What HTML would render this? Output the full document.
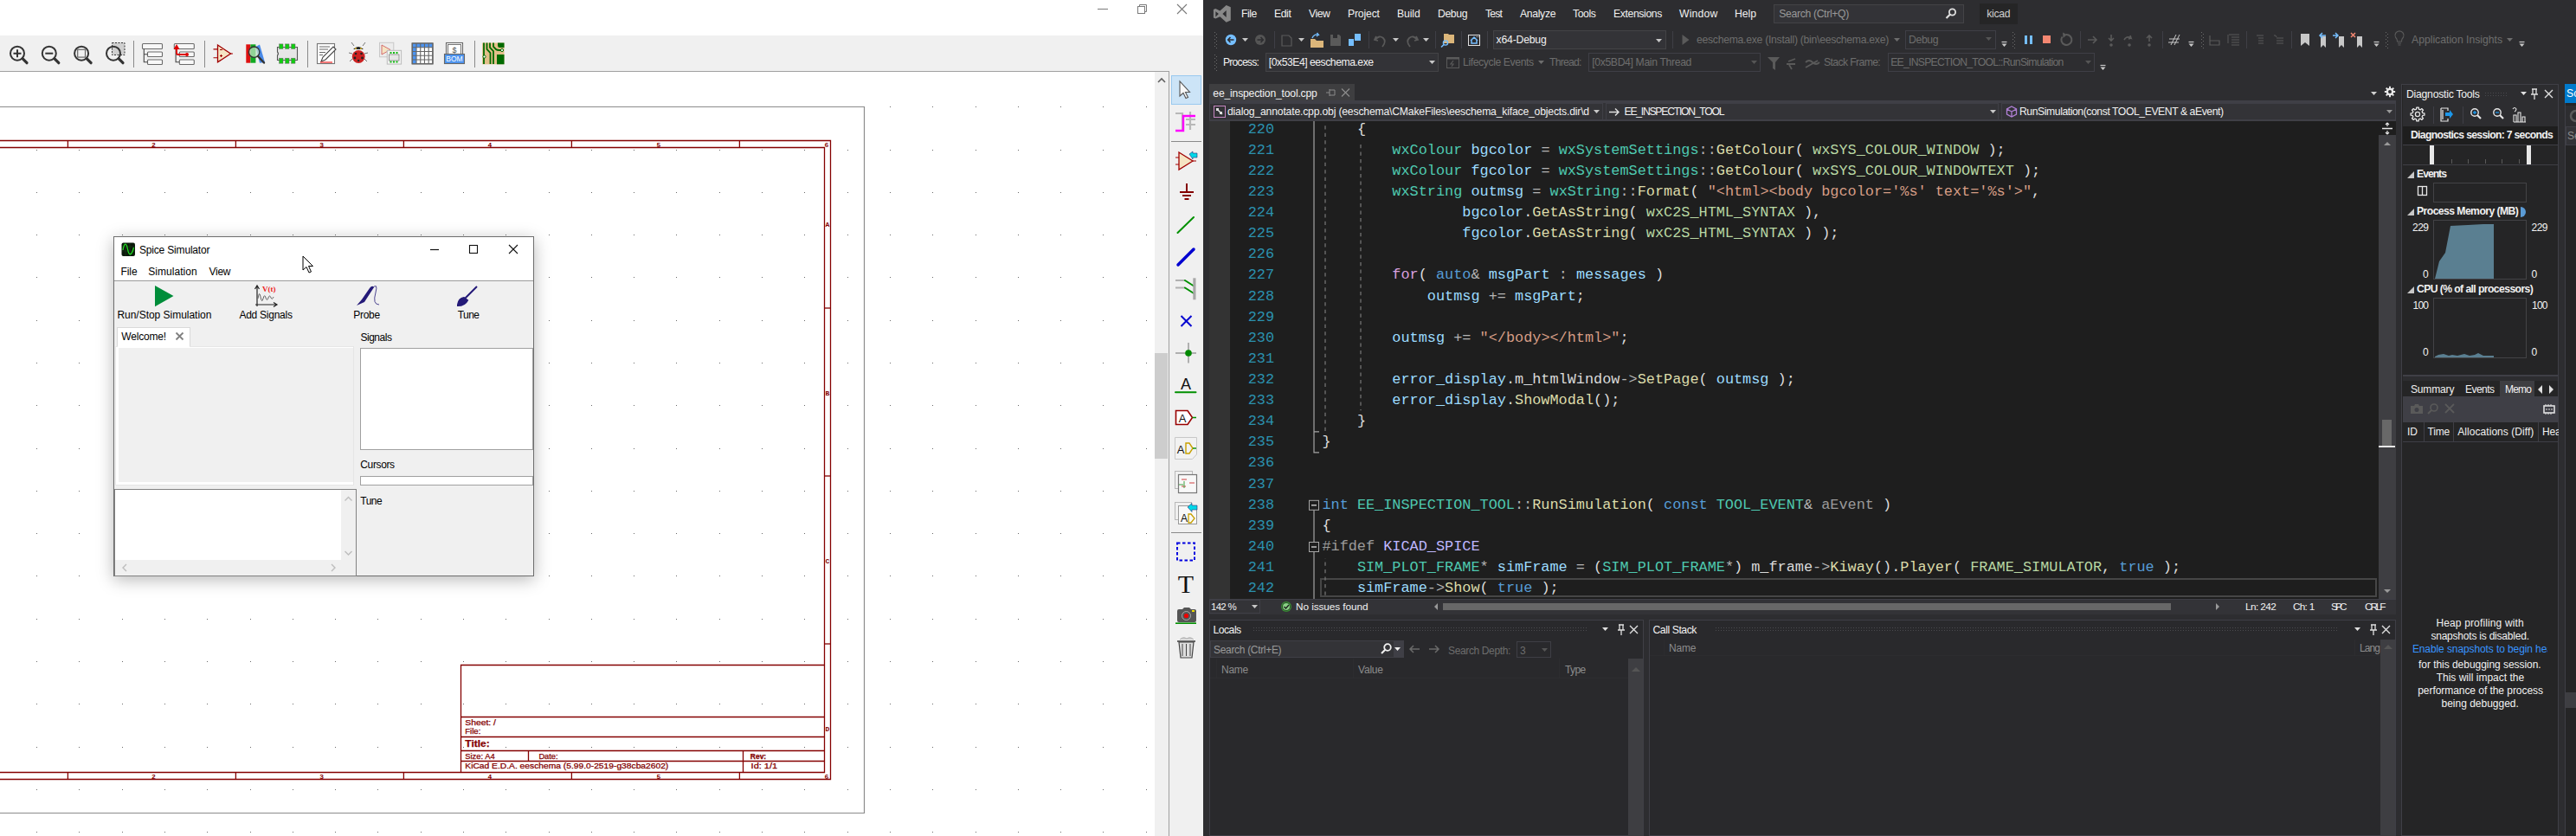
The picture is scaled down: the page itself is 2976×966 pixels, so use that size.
<!DOCTYPE html>
<html><head><meta charset="utf-8"><style>
html,body{margin:0;padding:0;}
body{width:2976px;height:966px;overflow:hidden;position:relative;background:#fff;font-family:"Liberation Sans", sans-serif;}
.t{position:absolute;white-space:pre;}
.r{position:absolute;}
svg{position:absolute;}
</style></head><body>
<svg style="left:0;top:0" width="1390" height="41" viewBox="0 0 1390 41">
<line x1="1268" y1="10.5" x2="1280" y2="10.5" stroke="#7a7a7a" stroke-width="1"/>
<rect x="1314.5" y="7.5" width="8" height="8" fill="none" stroke="#7a7a7a"/>
<path d="M1316.5 7.5 V5.5 H1324.5 V13.5 H1322.5" fill="none" stroke="#7a7a7a"/>
<path d="M1360 5 L1371 16 M1371 5 L1360 16" stroke="#7a7a7a" stroke-width="1.1"/>
</svg><div class="r" style="left:0px;top:41px;width:1390px;height:41px;background:#f0f0f0;"></div><div class="r" style="left:0px;top:82px;width:1334px;height:884px;background:#fff;"></div><div class="r" style="left:0px;top:82px;width:1350px;height:1px;background:#a0a0a0;"></div><div class="r" style="left:1334px;top:83px;width:16px;height:883px;background:#f0f0f0;"></div><div class="r" style="left:1334px;top:408px;width:15px;height:122px;background:#cdcdcd;"></div><svg style="left:1334px;top:83px" width="16" height="20"><path d="M4 12 L8 8 L12 12" fill="none" stroke="#606060" stroke-width="1.6"/></svg><div class="r" style="left:1350px;top:82px;width:1px;height:884px;background:#a0a0a0;"></div><div class="r" style="left:1351px;top:82px;width:39px;height:884px;background:#f0f0f0;"></div><svg style="left:0;top:0" width="1334" height="966" viewBox="0 0 1334 966"><path d="M42 123h1v1h-1zM91 123h1v1h-1zM141 123h1v1h-1zM190 123h1v1h-1zM239 123h1v1h-1zM289 123h1v1h-1zM338 123h1v1h-1zM387 123h1v1h-1zM436 123h1v1h-1zM486 123h1v1h-1zM535 123h1v1h-1zM584 123h1v1h-1zM634 123h1v1h-1zM683 123h1v1h-1zM732 123h1v1h-1zM781 123h1v1h-1zM831 123h1v1h-1zM880 123h1v1h-1zM929 123h1v1h-1zM979 123h1v1h-1zM1028 123h1v1h-1zM1077 123h1v1h-1zM1127 123h1v1h-1zM1176 123h1v1h-1zM1225 123h1v1h-1zM1274 123h1v1h-1zM1324 123h1v1h-1zM42 173h1v1h-1zM91 173h1v1h-1zM141 173h1v1h-1zM190 173h1v1h-1zM239 173h1v1h-1zM289 173h1v1h-1zM338 173h1v1h-1zM387 173h1v1h-1zM436 173h1v1h-1zM486 173h1v1h-1zM535 173h1v1h-1zM584 173h1v1h-1zM634 173h1v1h-1zM683 173h1v1h-1zM732 173h1v1h-1zM781 173h1v1h-1zM831 173h1v1h-1zM880 173h1v1h-1zM929 173h1v1h-1zM979 173h1v1h-1zM1028 173h1v1h-1zM1077 173h1v1h-1zM1127 173h1v1h-1zM1176 173h1v1h-1zM1225 173h1v1h-1zM1274 173h1v1h-1zM1324 173h1v1h-1zM42 222h1v1h-1zM91 222h1v1h-1zM141 222h1v1h-1zM190 222h1v1h-1zM239 222h1v1h-1zM289 222h1v1h-1zM338 222h1v1h-1zM387 222h1v1h-1zM436 222h1v1h-1zM486 222h1v1h-1zM535 222h1v1h-1zM584 222h1v1h-1zM634 222h1v1h-1zM683 222h1v1h-1zM732 222h1v1h-1zM781 222h1v1h-1zM831 222h1v1h-1zM880 222h1v1h-1zM929 222h1v1h-1zM979 222h1v1h-1zM1028 222h1v1h-1zM1077 222h1v1h-1zM1127 222h1v1h-1zM1176 222h1v1h-1zM1225 222h1v1h-1zM1274 222h1v1h-1zM1324 222h1v1h-1zM42 271h1v1h-1zM91 271h1v1h-1zM141 271h1v1h-1zM190 271h1v1h-1zM239 271h1v1h-1zM289 271h1v1h-1zM338 271h1v1h-1zM387 271h1v1h-1zM436 271h1v1h-1zM486 271h1v1h-1zM535 271h1v1h-1zM584 271h1v1h-1zM634 271h1v1h-1zM683 271h1v1h-1zM732 271h1v1h-1zM781 271h1v1h-1zM831 271h1v1h-1zM880 271h1v1h-1zM929 271h1v1h-1zM979 271h1v1h-1zM1028 271h1v1h-1zM1077 271h1v1h-1zM1127 271h1v1h-1zM1176 271h1v1h-1zM1225 271h1v1h-1zM1274 271h1v1h-1zM1324 271h1v1h-1zM42 320h1v1h-1zM91 320h1v1h-1zM141 320h1v1h-1zM190 320h1v1h-1zM239 320h1v1h-1zM289 320h1v1h-1zM338 320h1v1h-1zM387 320h1v1h-1zM436 320h1v1h-1zM486 320h1v1h-1zM535 320h1v1h-1zM584 320h1v1h-1zM634 320h1v1h-1zM683 320h1v1h-1zM732 320h1v1h-1zM781 320h1v1h-1zM831 320h1v1h-1zM880 320h1v1h-1zM929 320h1v1h-1zM979 320h1v1h-1zM1028 320h1v1h-1zM1077 320h1v1h-1zM1127 320h1v1h-1zM1176 320h1v1h-1zM1225 320h1v1h-1zM1274 320h1v1h-1zM1324 320h1v1h-1zM42 370h1v1h-1zM91 370h1v1h-1zM141 370h1v1h-1zM190 370h1v1h-1zM239 370h1v1h-1zM289 370h1v1h-1zM338 370h1v1h-1zM387 370h1v1h-1zM436 370h1v1h-1zM486 370h1v1h-1zM535 370h1v1h-1zM584 370h1v1h-1zM634 370h1v1h-1zM683 370h1v1h-1zM732 370h1v1h-1zM781 370h1v1h-1zM831 370h1v1h-1zM880 370h1v1h-1zM929 370h1v1h-1zM979 370h1v1h-1zM1028 370h1v1h-1zM1077 370h1v1h-1zM1127 370h1v1h-1zM1176 370h1v1h-1zM1225 370h1v1h-1zM1274 370h1v1h-1zM1324 370h1v1h-1zM42 419h1v1h-1zM91 419h1v1h-1zM141 419h1v1h-1zM190 419h1v1h-1zM239 419h1v1h-1zM289 419h1v1h-1zM338 419h1v1h-1zM387 419h1v1h-1zM436 419h1v1h-1zM486 419h1v1h-1zM535 419h1v1h-1zM584 419h1v1h-1zM634 419h1v1h-1zM683 419h1v1h-1zM732 419h1v1h-1zM781 419h1v1h-1zM831 419h1v1h-1zM880 419h1v1h-1zM929 419h1v1h-1zM979 419h1v1h-1zM1028 419h1v1h-1zM1077 419h1v1h-1zM1127 419h1v1h-1zM1176 419h1v1h-1zM1225 419h1v1h-1zM1274 419h1v1h-1zM1324 419h1v1h-1zM42 468h1v1h-1zM91 468h1v1h-1zM141 468h1v1h-1zM190 468h1v1h-1zM239 468h1v1h-1zM289 468h1v1h-1zM338 468h1v1h-1zM387 468h1v1h-1zM436 468h1v1h-1zM486 468h1v1h-1zM535 468h1v1h-1zM584 468h1v1h-1zM634 468h1v1h-1zM683 468h1v1h-1zM732 468h1v1h-1zM781 468h1v1h-1zM831 468h1v1h-1zM880 468h1v1h-1zM929 468h1v1h-1zM979 468h1v1h-1zM1028 468h1v1h-1zM1077 468h1v1h-1zM1127 468h1v1h-1zM1176 468h1v1h-1zM1225 468h1v1h-1zM1274 468h1v1h-1zM1324 468h1v1h-1zM42 518h1v1h-1zM91 518h1v1h-1zM141 518h1v1h-1zM190 518h1v1h-1zM239 518h1v1h-1zM289 518h1v1h-1zM338 518h1v1h-1zM387 518h1v1h-1zM436 518h1v1h-1zM486 518h1v1h-1zM535 518h1v1h-1zM584 518h1v1h-1zM634 518h1v1h-1zM683 518h1v1h-1zM732 518h1v1h-1zM781 518h1v1h-1zM831 518h1v1h-1zM880 518h1v1h-1zM929 518h1v1h-1zM979 518h1v1h-1zM1028 518h1v1h-1zM1077 518h1v1h-1zM1127 518h1v1h-1zM1176 518h1v1h-1zM1225 518h1v1h-1zM1274 518h1v1h-1zM1324 518h1v1h-1zM42 567h1v1h-1zM91 567h1v1h-1zM141 567h1v1h-1zM190 567h1v1h-1zM239 567h1v1h-1zM289 567h1v1h-1zM338 567h1v1h-1zM387 567h1v1h-1zM436 567h1v1h-1zM486 567h1v1h-1zM535 567h1v1h-1zM584 567h1v1h-1zM634 567h1v1h-1zM683 567h1v1h-1zM732 567h1v1h-1zM781 567h1v1h-1zM831 567h1v1h-1zM880 567h1v1h-1zM929 567h1v1h-1zM979 567h1v1h-1zM1028 567h1v1h-1zM1077 567h1v1h-1zM1127 567h1v1h-1zM1176 567h1v1h-1zM1225 567h1v1h-1zM1274 567h1v1h-1zM1324 567h1v1h-1zM42 616h1v1h-1zM91 616h1v1h-1zM141 616h1v1h-1zM190 616h1v1h-1zM239 616h1v1h-1zM289 616h1v1h-1zM338 616h1v1h-1zM387 616h1v1h-1zM436 616h1v1h-1zM486 616h1v1h-1zM535 616h1v1h-1zM584 616h1v1h-1zM634 616h1v1h-1zM683 616h1v1h-1zM732 616h1v1h-1zM781 616h1v1h-1zM831 616h1v1h-1zM880 616h1v1h-1zM929 616h1v1h-1zM979 616h1v1h-1zM1028 616h1v1h-1zM1077 616h1v1h-1zM1127 616h1v1h-1zM1176 616h1v1h-1zM1225 616h1v1h-1zM1274 616h1v1h-1zM1324 616h1v1h-1zM42 665h1v1h-1zM91 665h1v1h-1zM141 665h1v1h-1zM190 665h1v1h-1zM239 665h1v1h-1zM289 665h1v1h-1zM338 665h1v1h-1zM387 665h1v1h-1zM436 665h1v1h-1zM486 665h1v1h-1zM535 665h1v1h-1zM584 665h1v1h-1zM634 665h1v1h-1zM683 665h1v1h-1zM732 665h1v1h-1zM781 665h1v1h-1zM831 665h1v1h-1zM880 665h1v1h-1zM929 665h1v1h-1zM979 665h1v1h-1zM1028 665h1v1h-1zM1077 665h1v1h-1zM1127 665h1v1h-1zM1176 665h1v1h-1zM1225 665h1v1h-1zM1274 665h1v1h-1zM1324 665h1v1h-1zM42 715h1v1h-1zM91 715h1v1h-1zM141 715h1v1h-1zM190 715h1v1h-1zM239 715h1v1h-1zM289 715h1v1h-1zM338 715h1v1h-1zM387 715h1v1h-1zM436 715h1v1h-1zM486 715h1v1h-1zM535 715h1v1h-1zM584 715h1v1h-1zM634 715h1v1h-1zM683 715h1v1h-1zM732 715h1v1h-1zM781 715h1v1h-1zM831 715h1v1h-1zM880 715h1v1h-1zM929 715h1v1h-1zM979 715h1v1h-1zM1028 715h1v1h-1zM1077 715h1v1h-1zM1127 715h1v1h-1zM1176 715h1v1h-1zM1225 715h1v1h-1zM1274 715h1v1h-1zM1324 715h1v1h-1zM42 764h1v1h-1zM91 764h1v1h-1zM141 764h1v1h-1zM190 764h1v1h-1zM239 764h1v1h-1zM289 764h1v1h-1zM338 764h1v1h-1zM387 764h1v1h-1zM436 764h1v1h-1zM486 764h1v1h-1zM535 764h1v1h-1zM584 764h1v1h-1zM634 764h1v1h-1zM683 764h1v1h-1zM732 764h1v1h-1zM781 764h1v1h-1zM831 764h1v1h-1zM880 764h1v1h-1zM929 764h1v1h-1zM979 764h1v1h-1zM1028 764h1v1h-1zM1077 764h1v1h-1zM1127 764h1v1h-1zM1176 764h1v1h-1zM1225 764h1v1h-1zM1274 764h1v1h-1zM1324 764h1v1h-1zM42 813h1v1h-1zM91 813h1v1h-1zM141 813h1v1h-1zM190 813h1v1h-1zM239 813h1v1h-1zM289 813h1v1h-1zM338 813h1v1h-1zM387 813h1v1h-1zM436 813h1v1h-1zM486 813h1v1h-1zM535 813h1v1h-1zM584 813h1v1h-1zM634 813h1v1h-1zM683 813h1v1h-1zM732 813h1v1h-1zM781 813h1v1h-1zM831 813h1v1h-1zM880 813h1v1h-1zM929 813h1v1h-1zM979 813h1v1h-1zM1028 813h1v1h-1zM1077 813h1v1h-1zM1127 813h1v1h-1zM1176 813h1v1h-1zM1225 813h1v1h-1zM1274 813h1v1h-1zM1324 813h1v1h-1zM42 863h1v1h-1zM91 863h1v1h-1zM141 863h1v1h-1zM190 863h1v1h-1zM239 863h1v1h-1zM289 863h1v1h-1zM338 863h1v1h-1zM387 863h1v1h-1zM436 863h1v1h-1zM486 863h1v1h-1zM535 863h1v1h-1zM584 863h1v1h-1zM634 863h1v1h-1zM683 863h1v1h-1zM732 863h1v1h-1zM781 863h1v1h-1zM831 863h1v1h-1zM880 863h1v1h-1zM929 863h1v1h-1zM979 863h1v1h-1zM1028 863h1v1h-1zM1077 863h1v1h-1zM1127 863h1v1h-1zM1176 863h1v1h-1zM1225 863h1v1h-1zM1274 863h1v1h-1zM1324 863h1v1h-1zM42 912h1v1h-1zM91 912h1v1h-1zM141 912h1v1h-1zM190 912h1v1h-1zM239 912h1v1h-1zM289 912h1v1h-1zM338 912h1v1h-1zM387 912h1v1h-1zM436 912h1v1h-1zM486 912h1v1h-1zM535 912h1v1h-1zM584 912h1v1h-1zM634 912h1v1h-1zM683 912h1v1h-1zM732 912h1v1h-1zM781 912h1v1h-1zM831 912h1v1h-1zM880 912h1v1h-1zM929 912h1v1h-1zM979 912h1v1h-1zM1028 912h1v1h-1zM1077 912h1v1h-1zM1127 912h1v1h-1zM1176 912h1v1h-1zM1225 912h1v1h-1zM1274 912h1v1h-1zM1324 912h1v1h-1zM42 961h1v1h-1zM91 961h1v1h-1zM141 961h1v1h-1zM190 961h1v1h-1zM239 961h1v1h-1zM289 961h1v1h-1zM338 961h1v1h-1zM387 961h1v1h-1zM436 961h1v1h-1zM486 961h1v1h-1zM535 961h1v1h-1zM584 961h1v1h-1zM634 961h1v1h-1zM683 961h1v1h-1zM732 961h1v1h-1zM781 961h1v1h-1zM831 961h1v1h-1zM880 961h1v1h-1zM929 961h1v1h-1zM979 961h1v1h-1zM1028 961h1v1h-1zM1077 961h1v1h-1zM1127 961h1v1h-1zM1176 961h1v1h-1zM1225 961h1v1h-1zM1274 961h1v1h-1zM1324 961h1v1h-1z" fill="#6a6a6a"/><path d="M0 123.5 H998.5 V939.5 H0" fill="none" stroke="#8c8c8c" stroke-width="1.2"/><path d="M0 162.5 H959.5 V900.5 H0 M0 170.5 H952.5 V892.5 H0" fill="none" stroke="#840000" stroke-width="1.3"/><path d="M78.4 162.5 V170.5 M78.4 892.5 V900.5" stroke="#840000" stroke-width="1.3"/><path d="M272.4 162.5 V170.5 M272.4 892.5 V900.5" stroke="#840000" stroke-width="1.3"/><path d="M466.4 162.5 V170.5 M466.4 892.5 V900.5" stroke="#840000" stroke-width="1.3"/><path d="M660.4 162.5 V170.5 M660.4 892.5 V900.5" stroke="#840000" stroke-width="1.3"/><path d="M854.4 162.5 V170.5 M854.4 892.5 V900.5" stroke="#840000" stroke-width="1.3"/><path d="M952.5 356 H959.5" stroke="#840000" stroke-width="1.3"/><path d="M952.5 550 H959.5" stroke="#840000" stroke-width="1.3"/><path d="M952.5 744 H959.5" stroke="#840000" stroke-width="1.3"/><text x="177.4" y="169.5" font-family="Liberation Mono" font-size="8" fill="#840000" text-anchor="middle" font-weight="bold">2</text><text x="177.4" y="899.5" font-family="Liberation Mono" font-size="8" fill="#840000" text-anchor="middle" font-weight="bold">2</text><text x="371.7" y="169.5" font-family="Liberation Mono" font-size="8" fill="#840000" text-anchor="middle" font-weight="bold">3</text><text x="371.7" y="899.5" font-family="Liberation Mono" font-size="8" fill="#840000" text-anchor="middle" font-weight="bold">3</text><text x="566" y="169.5" font-family="Liberation Mono" font-size="8" fill="#840000" text-anchor="middle" font-weight="bold">4</text><text x="566" y="899.5" font-family="Liberation Mono" font-size="8" fill="#840000" text-anchor="middle" font-weight="bold">4</text><text x="761" y="169.5" font-family="Liberation Mono" font-size="8" fill="#840000" text-anchor="middle" font-weight="bold">5</text><text x="761" y="899.5" font-family="Liberation Mono" font-size="8" fill="#840000" text-anchor="middle" font-weight="bold">5</text><text x="955" y="169.5" font-family="Liberation Mono" font-size="8" fill="#840000" text-anchor="middle" font-weight="bold">6</text><text x="955" y="899.5" font-family="Liberation Mono" font-size="8" fill="#840000" text-anchor="middle" font-weight="bold">6</text><text x="956" y="261.5" font-family="Liberation Mono" font-size="8" fill="#840000" text-anchor="middle" font-weight="bold">A</text><text x="956" y="456.5" font-family="Liberation Mono" font-size="8" fill="#840000" text-anchor="middle" font-weight="bold">B</text><text x="956" y="650.5" font-family="Liberation Mono" font-size="8" fill="#840000" text-anchor="middle" font-weight="bold">C</text><text x="956" y="845" font-family="Liberation Mono" font-size="8" fill="#840000" text-anchor="middle" font-weight="bold">D</text><path d="M532.5 892.5 V768.5 H952.5 M532.5 828.5 H952.5 M532.5 851.5 H952.5 M532.5 867.5 H952.5 M532.5 879.5 H952.5 M610.5 867.5 V879.5 M858.5 867.5 V892.5" fill="none" stroke="#840000" stroke-width="1.3"/><text x="537.3" y="837.5" font-family="Liberation Sans" font-size="8.5" fill="#840000" font-weight="normal" textLength="35.7" lengthAdjust="spacingAndGlyphs" stroke="#840000" stroke-width="0.25">Sheet: /</text><text x="537.3" y="847.5" font-family="Liberation Sans" font-size="8.5" fill="#840000" font-weight="normal" textLength="18" lengthAdjust="spacingAndGlyphs" stroke="#840000" stroke-width="0.25">File:</text><text x="537.3" y="862.5" font-family="Liberation Sans" font-size="10.5" fill="#840000" font-weight="bold" textLength="28.4" lengthAdjust="spacingAndGlyphs" stroke="#840000" stroke-width="0.25">Title:</text><text x="537.3" y="876.5" font-family="Liberation Sans" font-size="8.5" fill="#840000" font-weight="normal" textLength="34.3" lengthAdjust="spacingAndGlyphs" stroke="#840000" stroke-width="0.25">Size: A4</text><text x="622.4" y="876.5" font-family="Liberation Sans" font-size="8.5" fill="#840000" font-weight="normal" textLength="22.2" lengthAdjust="spacingAndGlyphs" stroke="#840000" stroke-width="0.25">Date:</text><text x="866.8" y="876.5" font-family="Liberation Sans" font-size="8.5" fill="#840000" font-weight="bold" textLength="18.4" lengthAdjust="spacingAndGlyphs" stroke="#840000" stroke-width="0.25">Rev:</text><text x="537.3" y="888.3" font-family="Liberation Sans" font-size="8.5" fill="#840000" font-weight="normal" textLength="235" lengthAdjust="spacingAndGlyphs" stroke="#840000" stroke-width="0.25">KiCad E.D.A.  eeschema (5.99.0-2519-g38cba2602)</text><text x="867.6" y="888.3" font-family="Liberation Sans" font-size="8.5" fill="#840000" font-weight="normal" textLength="30.5" lengthAdjust="spacingAndGlyphs" stroke="#840000" stroke-width="0.25">Id: 1/1</text></svg><div class="r" style="left:1390px;top:0px;width:1586px;height:966px;background:#2d2d30;"></div><svg style="left:1390px;top:0px" width="40" height="30" viewBox="1390 0 40 30"><path d="M1416.7 6.1 L1421.8 8.3 V23.4 L1416.7 25.8 L1409.4 19.3 L1404.3 21.6 L1401.9 20.4 V11.1 L1404.3 9.9 L1409.4 12.4 Z M1404.4 13.3 V19.4 L1407.9 15.9 Z M1416.7 12 L1412.4 15.9 L1416.7 20 Z" fill="#888888" fill-rule="evenodd"/></svg><div class="t" style="left:1434px;top:7.96px;font-size:12.2px;line-height:17.08px;color:#f1f1f1;font-weight:normal;font-family:'Liberation Sans', sans-serif;letter-spacing:-0.486px;">File</div><div class="t" style="left:1472px;top:7.96px;font-size:12.2px;line-height:17.08px;color:#f1f1f1;font-weight:normal;font-family:'Liberation Sans', sans-serif;letter-spacing:-0.408px;">Edit</div><div class="t" style="left:1512px;top:7.96px;font-size:12.2px;line-height:17.08px;color:#f1f1f1;font-weight:normal;font-family:'Liberation Sans', sans-serif;letter-spacing:-0.441px;">View</div><div class="t" style="left:1557px;top:7.96px;font-size:12.2px;line-height:17.08px;color:#f1f1f1;font-weight:normal;font-family:'Liberation Sans', sans-serif;letter-spacing:-0.162px;">Project</div><div class="t" style="left:1614px;top:7.96px;font-size:12.2px;line-height:17.08px;color:#f1f1f1;font-weight:normal;font-family:'Liberation Sans', sans-serif;letter-spacing:-0.082px;">Build</div><div class="t" style="left:1661px;top:7.96px;font-size:12.2px;line-height:17.08px;color:#f1f1f1;font-weight:normal;font-family:'Liberation Sans', sans-serif;letter-spacing:-0.363px;">Debug</div><div class="t" style="left:1716px;top:7.96px;font-size:12.2px;line-height:17.08px;color:#f1f1f1;font-weight:normal;font-family:'Liberation Sans', sans-serif;letter-spacing:-0.858px;">Test</div><div class="t" style="left:1756px;top:7.96px;font-size:12.2px;line-height:17.08px;color:#f1f1f1;font-weight:normal;font-family:'Liberation Sans', sans-serif;letter-spacing:-0.317px;">Analyze</div><div class="t" style="left:1817px;top:7.96px;font-size:12.2px;line-height:17.08px;color:#f1f1f1;font-weight:normal;font-family:'Liberation Sans', sans-serif;letter-spacing:-0.42px;">Tools</div><div class="t" style="left:1864px;top:7.96px;font-size:12.2px;line-height:17.08px;color:#f1f1f1;font-weight:normal;font-family:'Liberation Sans', sans-serif;letter-spacing:-0.364px;">Extensions</div><div class="t" style="left:1940px;top:7.96px;font-size:12.2px;line-height:17.08px;color:#f1f1f1;font-weight:normal;font-family:'Liberation Sans', sans-serif;letter-spacing:0.182px;">Window</div><div class="t" style="left:2004px;top:7.96px;font-size:12.2px;line-height:17.08px;color:#f1f1f1;font-weight:normal;font-family:'Liberation Sans', sans-serif;letter-spacing:-0.031px;">Help</div><div class="r" style="left:2049px;top:5px;width:220px;height:22px;background:#333337;box-sizing:border-box;border:1px solid #434346;"></div><div class="t" style="left:2055.2px;top:7.96px;font-size:12.2px;line-height:17.08px;color:#999999;font-weight:normal;font-family:'Liberation Sans', sans-serif;letter-spacing:-0.326px;">Search (Ctrl+Q)</div><svg style="left:2246px;top:8px" width="16" height="16" viewBox="0 0 16 16"><circle cx="9.5" cy="6" r="3.6" fill="none" stroke="#e0e0e0" stroke-width="1.8"/><path d="M7 8.5 L2.5 13" stroke="#e0e0e0" stroke-width="2.2"/></svg><div class="r" style="left:2287px;top:4px;width:44px;height:24px;background:#252526;"></div><div class="t" style="left:2295.2px;top:7.96px;font-size:12.2px;line-height:17.08px;color:#d0d0d0;font-weight:normal;font-family:'Liberation Sans', sans-serif;letter-spacing:-0.295px;">kicad</div><svg style="left:0;top:0" width="2976" height="90"><rect x="1403" y="37" width="1" height="1" fill="#6a6a6a"/><rect x="1405" y="39" width="1" height="1" fill="#6a6a6a"/><rect x="1403" y="41" width="1" height="1" fill="#6a6a6a"/><rect x="1405" y="43" width="1" height="1" fill="#6a6a6a"/><rect x="1403" y="45" width="1" height="1" fill="#6a6a6a"/><rect x="1405" y="47" width="1" height="1" fill="#6a6a6a"/><rect x="1403" y="49" width="1" height="1" fill="#6a6a6a"/><rect x="1405" y="51" width="1" height="1" fill="#6a6a6a"/><rect x="1403" y="53" width="1" height="1" fill="#6a6a6a"/><rect x="1405" y="55" width="1" height="1" fill="#6a6a6a"/></svg><svg style="left:1390px;top:28px" width="1586" height="60" viewBox="1390 28 1586 60">
<circle cx="1422" cy="46" r="6.2" fill="#75beff"/><path d="M1425.5 46 H1419 M1421.5 43 L1418.7 46 L1421.5 49" fill="none" stroke="#2d2d30" stroke-width="1.6"/>
<circle cx="1456" cy="46" r="6" fill="#555"/><path d="M1452.5 46 H1459 M1456.5 43 L1459.3 46 L1456.5 49" fill="none" stroke="#2d2d30" stroke-width="1.6"/>
<path d="M1481 41 h8 l3 3 v9 h-11 z" fill="none" stroke="#5a5a5a" stroke-width="1.2"/>
<path d="M1514 45 h5 l2 2 h8 v8 h-15 z" fill="#dcb67a"/><path d="M1516 44 q2-5 7-4 l-1.5-2 M1523 40 l-2 2" fill="none" stroke="#75beff" stroke-width="1.4"/>
<path d="M1537 40 h10 l2 2 v11 h-12 z" fill="#5a5a5a"/><rect x="1540" y="40" width="5" height="4" fill="#2d2d30"/>
<path d="M1558 45 h6 v8 h-6 z M1565 39 h7 v8 h-7 z" fill="#75beff"/>
<path d="M1590 42 l-2 4 l4 1 M1589 46 q4-6 9-2 q4 4 -1 10" fill="none" stroke="#5a5a5a" stroke-width="1.8"/>
<path d="M1636 42 l2 4 l-4 1 M1637 46 q-4-6 -9-2 q-4 4 1 10" fill="none" stroke="#5a5a5a" stroke-width="1.8"/>
<path d="M1668 39 h5 l1 1 h6 v10 h-12 z" fill="#dcb67a"/><circle cx="1670" cy="49.5" r="2.6" fill="none" stroke="#75beff" stroke-width="1.4"/><path d="M1668 51.5 l-3 3" stroke="#75beff" stroke-width="1.6"/>
<rect x="1696.5" y="40.5" width="13" height="12" fill="none" stroke="#e0e0e0"/><path d="M1699 47 l4-4 l4 4 M1700 46 v4 h6 v-4" fill="none" stroke="#75beff" stroke-width="1.5"/><path d="M1705.5 42.5 h1 M1707.5 42.5 h1" stroke="#e0e0e0"/>
<path d="M1943.5 40 v12 l8 -6 z" fill="#5a5a5a"/>
</svg><svg style="left:1435px;top:44px" width="8" height="5"><path d="M0 0 H7 L3.5 4 Z" fill="#c8c8c8"/></svg><svg style="left:1500px;top:44px" width="8" height="5"><path d="M0 0 H7 L3.5 4 Z" fill="#c8c8c8"/></svg><svg style="left:1609px;top:44px" width="8" height="5"><path d="M0 0 H7 L3.5 4 Z" fill="#c8c8c8"/></svg><svg style="left:1644px;top:44px" width="8" height="5"><path d="M0 0 H7 L3.5 4 Z" fill="#c8c8c8"/></svg><div class="r" style="left:1472px;top:36px;width:1px;height:20px;background:#3f3f46;"></div><div class="r" style="left:1581px;top:36px;width:1px;height:20px;background:#3f3f46;"></div><div class="r" style="left:1658px;top:36px;width:1px;height:20px;background:#3f3f46;"></div><div class="r" style="left:1688px;top:36px;width:1px;height:20px;background:#3f3f46;"></div><div class="r" style="left:1718px;top:36px;width:1px;height:20px;background:#3f3f46;"></div><div class="r" style="left:1932px;top:36px;width:1px;height:20px;background:#3f3f46;"></div><div class="r" style="left:1725px;top:35px;width:200px;height:22px;background:#333337;box-sizing:border-box;border:1px solid #434346;"></div><div class="t" style="left:1728.6px;top:38.46px;font-size:12.2px;line-height:17.08px;color:#f1f1f1;font-weight:normal;font-family:'Liberation Sans', sans-serif;letter-spacing:-0.186px;">x64-Debug</div><svg style="left:1913px;top:45px" width="8" height="5"><path d="M0 0 H7 L3.5 4 Z" fill="#c8c8c8"/></svg><div class="t" style="left:1960px;top:38.46px;font-size:12.2px;line-height:17.08px;color:#6d6d6d;font-weight:normal;font-family:'Liberation Sans', sans-serif;letter-spacing:-0.269px;">eeschema.exe (Install) (bin\eeschema.exe)</div><svg style="left:2188px;top:44px" width="8" height="5"><path d="M0 0 H7 L3.5 4 Z" fill="#6d6d6d"/></svg><div class="r" style="left:2201px;top:35px;width:105px;height:22px;background:#2d2d30;box-sizing:border-box;border:1px solid #3f3f46;"></div><div class="t" style="left:2205px;top:38.46px;font-size:12.2px;line-height:17.08px;color:#6d6d6d;font-weight:normal;font-family:'Liberation Sans', sans-serif;letter-spacing:-0.338px;">Debug</div><svg style="left:2294px;top:43px" width="8" height="5"><path d="M0 0 H7 L3.5 4 Z" fill="#555"/></svg><svg style="left:2312px;top:47px" width="8" height="8"><path d="M0.5 1.5 H6.5" stroke="#c8c8c8" stroke-width="1.2"/><path d="M0.5 3.5 H6.5 L3.5 7 Z" fill="#c8c8c8"/></svg><svg style="left:0;top:0" width="2976" height="90"><rect x="2325" y="37" width="1" height="1" fill="#6a6a6a"/><rect x="2327" y="39" width="1" height="1" fill="#6a6a6a"/><rect x="2325" y="41" width="1" height="1" fill="#6a6a6a"/><rect x="2327" y="43" width="1" height="1" fill="#6a6a6a"/><rect x="2325" y="45" width="1" height="1" fill="#6a6a6a"/><rect x="2327" y="47" width="1" height="1" fill="#6a6a6a"/><rect x="2325" y="49" width="1" height="1" fill="#6a6a6a"/><rect x="2327" y="51" width="1" height="1" fill="#6a6a6a"/><rect x="2325" y="53" width="1" height="1" fill="#6a6a6a"/><rect x="2327" y="55" width="1" height="1" fill="#6a6a6a"/></svg><svg style="left:2330px;top:28px" width="646" height="60" viewBox="2330 28 646 60">
<rect x="2339" y="41" width="3" height="10" fill="#75beff"/><rect x="2345" y="41" width="3" height="10" fill="#75beff"/>
<rect x="2360" y="41" width="9" height="9" fill="#f48771"/>
<path d="M2382.5 42.5 A6 6 0 1 0 2387 40" fill="none" stroke="#5a5a5a" stroke-width="2"/><path d="M2383 37.5 L2388 40 L2383.5 44 Z" fill="#5a5a5a"/>
<path d="M2412 46 h10 M2418 42 l4 4 l-4 4" fill="none" stroke="#5a5a5a" stroke-width="1.6"/>
<path d="M2439 40 v7 M2436 44 l3 3 l3 -3" fill="none" stroke="#5a5a5a" stroke-width="1.6"/><circle cx="2439" cy="52" r="1.8" fill="#5a5a5a"/>
<path d="M2454 46 q3-5 8-2 l-1-3 M2462 44 l-3 1" fill="none" stroke="#5a5a5a" stroke-width="1.6"/><circle cx="2460" cy="52" r="1.8" fill="#5a5a5a"/>
<path d="M2483 48 v-7 M2480 44 l3 -3 l3 3" fill="none" stroke="#5a5a5a" stroke-width="1.6"/><circle cx="2483" cy="52" r="1.8" fill="#5a5a5a"/>
<path d="M2508 52 l6-12 M2512 52 l6-12 M2506 45 h12 M2505 49 h12" fill="none" stroke="#c8c8c8" stroke-width="1"/>
<path d="M2553 41 v6 h11 v5 h-11 z" fill="none" stroke="#5a5a5a" stroke-width="1.2"/>
<path d="M2575 40 h12 M2578 43 h9 M2578 46 h9 M2578 49 h9 M2578 52 h9 M2574 40 v10" fill="none" stroke="#5a5a5a" stroke-width="1"/>
<path d="M2607 41 h8 M2609 44 h6 M2609 47 h6 M2609 50 h6" fill="none" stroke="#5a5a5a" stroke-width="1"/>
<path d="M2627 41 h2 l1 2 M2630 44 h8 M2630 47 h8 M2630 50 h8" fill="none" stroke="#5a5a5a" stroke-width="1"/>
<path d="M2658 39 h10 v14 l-5 -4 l-5 4 z" fill="#c8c8c8"/>
<path d="M2681 42 h6 v13 l-3-3 l-3 3 z" fill="#c8c8c8"/><path d="M2687 41 h-6 M2683 38 l-3 3 l3 3" fill="none" stroke="#75beff" stroke-width="1.5"/>
<path d="M2702 42 h6 v13 l-3-3 l-3 3 z" fill="#c8c8c8"/><path d="M2695 41 h6 M2698 38 l3 3 l-3 3" fill="none" stroke="#75beff" stroke-width="1.5"/>
<path d="M2723 42 h6 v13 l-3-3 l-3 3 z" fill="#c8c8c8"/><path d="M2716 38 l5 5 M2721 38 l-5 5" fill="none" stroke="#f48771" stroke-width="1.5"/>
<path d="M2769.5 48 Q2769.5 45 2767.5 43 A5 5 0 1 1 2776.5 43 Q2774.5 45 2774.5 48 Z M2770 50 h4 M2770.5 52 h3" fill="none" stroke="#5a5a5a" stroke-width="1.2"/>
</svg><div class="r" style="left:2403px;top:36px;width:1px;height:20px;background:#3f3f46;"></div><div class="r" style="left:2498px;top:36px;width:1px;height:20px;background:#3f3f46;"></div><div class="r" style="left:2595px;top:36px;width:1px;height:20px;background:#3f3f46;"></div><div class="r" style="left:2647px;top:36px;width:1px;height:20px;background:#3f3f46;"></div><svg style="left:2528px;top:47px" width="8" height="8"><path d="M0.5 1.5 H6.5" stroke="#c8c8c8" stroke-width="1.2"/><path d="M0.5 3.5 H6.5 L3.5 7 Z" fill="#c8c8c8"/></svg><svg style="left:0;top:0" width="2976" height="90"><rect x="2543" y="37" width="1" height="1" fill="#6a6a6a"/><rect x="2545" y="39" width="1" height="1" fill="#6a6a6a"/><rect x="2543" y="41" width="1" height="1" fill="#6a6a6a"/><rect x="2545" y="43" width="1" height="1" fill="#6a6a6a"/><rect x="2543" y="45" width="1" height="1" fill="#6a6a6a"/><rect x="2545" y="47" width="1" height="1" fill="#6a6a6a"/><rect x="2543" y="49" width="1" height="1" fill="#6a6a6a"/><rect x="2545" y="51" width="1" height="1" fill="#6a6a6a"/><rect x="2543" y="53" width="1" height="1" fill="#6a6a6a"/><rect x="2545" y="55" width="1" height="1" fill="#6a6a6a"/></svg><svg style="left:2742px;top:47px" width="8" height="8"><path d="M0.5 1.5 H6.5" stroke="#c8c8c8" stroke-width="1.2"/><path d="M0.5 3.5 H6.5 L3.5 7 Z" fill="#c8c8c8"/></svg><svg style="left:0;top:0" width="2976" height="90"><rect x="2756" y="37" width="1" height="1" fill="#6a6a6a"/><rect x="2758" y="39" width="1" height="1" fill="#6a6a6a"/><rect x="2756" y="41" width="1" height="1" fill="#6a6a6a"/><rect x="2758" y="43" width="1" height="1" fill="#6a6a6a"/><rect x="2756" y="45" width="1" height="1" fill="#6a6a6a"/><rect x="2758" y="47" width="1" height="1" fill="#6a6a6a"/><rect x="2756" y="49" width="1" height="1" fill="#6a6a6a"/><rect x="2758" y="51" width="1" height="1" fill="#6a6a6a"/><rect x="2756" y="53" width="1" height="1" fill="#6a6a6a"/><rect x="2758" y="55" width="1" height="1" fill="#6a6a6a"/></svg><div class="t" style="left:2786px;top:38.46px;font-size:12.2px;line-height:17.08px;color:#6d6d6d;font-weight:normal;font-family:'Liberation Sans', sans-serif;letter-spacing:0.004px;">Application Insights</div><svg style="left:2896px;top:44px" width="8" height="5"><path d="M0 0 H7 L3.5 4 Z" fill="#6d6d6d"/></svg><svg style="left:2910px;top:47px" width="8" height="8"><path d="M0.5 1.5 H6.5" stroke="#c8c8c8" stroke-width="1.2"/><path d="M0.5 3.5 H6.5 L3.5 7 Z" fill="#c8c8c8"/></svg><svg style="left:0;top:0" width="2976" height="90"><rect x="1403" y="63" width="1" height="1" fill="#6a6a6a"/><rect x="1405" y="65" width="1" height="1" fill="#6a6a6a"/><rect x="1403" y="67" width="1" height="1" fill="#6a6a6a"/><rect x="1405" y="69" width="1" height="1" fill="#6a6a6a"/><rect x="1403" y="71" width="1" height="1" fill="#6a6a6a"/><rect x="1405" y="73" width="1" height="1" fill="#6a6a6a"/><rect x="1403" y="75" width="1" height="1" fill="#6a6a6a"/><rect x="1405" y="77" width="1" height="1" fill="#6a6a6a"/><rect x="1403" y="79" width="1" height="1" fill="#6a6a6a"/><rect x="1405" y="81" width="1" height="1" fill="#6a6a6a"/></svg><div class="t" style="left:1413px;top:64.46px;font-size:12.2px;line-height:17.08px;color:#f1f1f1;font-weight:normal;font-family:'Liberation Sans', sans-serif;letter-spacing:-0.794px;">Process:</div><div class="r" style="left:1462px;top:61px;width:200px;height:22px;background:#333337;box-sizing:border-box;border:1px solid #434346;"></div><div class="t" style="left:1465.8px;top:64.46px;font-size:12.2px;line-height:17.08px;color:#f1f1f1;font-weight:normal;font-family:'Liberation Sans', sans-serif;letter-spacing:-0.475px;">[0x53E4] eeschema.exe</div><svg style="left:1651px;top:70px" width="8" height="5"><path d="M0 0 H7 L3.5 4 Z" fill="#c8c8c8"/></svg><svg style="left:1670px;top:63px" width="20" height="18"><rect x="1.5" y="3.5" width="14" height="12" fill="none" stroke="#5a5a5a"/><rect x="1.5" y="3.5" width="14" height="2" fill="#5a5a5a"/><path d="M9 7 l-3 4 h3 l-2 3" fill="none" stroke="#5a5a5a" stroke-width="1.2"/></svg><div class="t" style="left:1690px;top:64.46px;font-size:12.2px;line-height:17.08px;color:#6d6d6d;font-weight:normal;font-family:'Liberation Sans', sans-serif;letter-spacing:-0.397px;">Lifecycle Events</div><svg style="left:1777px;top:70px" width="8" height="5"><path d="M0 0 H7 L3.5 4 Z" fill="#6d6d6d"/></svg><div class="t" style="left:1790px;top:64.46px;font-size:12.2px;line-height:17.08px;color:#6d6d6d;font-weight:normal;font-family:'Liberation Sans', sans-serif;letter-spacing:-0.758px;">Thread:</div><div class="r" style="left:1835px;top:61px;width:199px;height:22px;background:#2d2d30;box-sizing:border-box;border:1px solid #3f3f46;"></div><div class="t" style="left:1839.2px;top:64.46px;font-size:12.2px;line-height:17.08px;color:#6d6d6d;font-weight:normal;font-family:'Liberation Sans', sans-serif;letter-spacing:-0.344px;">[0x5BD4] Main Thread</div><svg style="left:2023px;top:70px" width="8" height="5"><path d="M0 0 H7 L3.5 4 Z" fill="#555"/></svg><svg style="left:2040px;top:62px" width="70" height="22"><path d="M2 4 h14 l-5 6 v9 l-3 -2 v-7 z" fill="#5a5a5a"/><path d="M24 12 h10 M26 9 l8 -3 M30 18 l-3-5" fill="none" stroke="#5a5a5a" stroke-width="1.8"/><path d="M46 10 q4-4 8 0 q4 4 8 0 M46 16 l14 -8" fill="none" stroke="#5a5a5a" stroke-width="1.8"/></svg><div class="t" style="left:2107px;top:64.46px;font-size:12.2px;line-height:17.08px;color:#6d6d6d;font-weight:normal;font-family:'Liberation Sans', sans-serif;letter-spacing:-0.613px;">Stack Frame:</div><div class="r" style="left:2181px;top:61px;width:239px;height:22px;background:#2d2d30;box-sizing:border-box;border:1px solid #3f3f46;"></div><div class="t" style="left:2184.2px;top:64.46px;font-size:12.2px;line-height:17.08px;color:#6d6d6d;font-weight:normal;font-family:'Liberation Sans', sans-serif;letter-spacing:-0.726px;">EE_INSPECTION_TOOL::RunSimulation</div><svg style="left:2409px;top:70px" width="8" height="5"><path d="M0 0 H7 L3.5 4 Z" fill="#555"/></svg><svg style="left:2426px;top:74px" width="8" height="8"><path d="M0.5 1.5 H6.5" stroke="#c8c8c8" stroke-width="1.2"/><path d="M0.5 3.5 H6.5 L3.5 7 Z" fill="#c8c8c8"/></svg><div class="r" style="left:1397px;top:97px;width:168px;height:19px;background:#3e3e40;"></div><div class="t" style="left:1401.3px;top:99.96px;font-size:12.2px;line-height:17.08px;color:#f1f1f1;font-weight:normal;font-family:'Liberation Sans', sans-serif;letter-spacing:-0.196px;">ee_inspection_tool.cpp</div><svg style="left:1530px;top:100px" width="34" height="14"><path d="M2 7 h4 M6 3 v8 M6 4 h6 v6 h-6" fill="none" stroke="#8a8a8a" stroke-width="1"/><path d="M20 2.5 l9 9 M29 2.5 l-9 9" stroke="#8a8a8a" stroke-width="1.3"/></svg><svg style="left:2739px;top:106px" width="8" height="5"><path d="M0 0 H7 L3.5 4 Z" fill="#d0d0d0"/></svg><svg style="left:2754px;top:99px" width="14" height="14" viewBox="0 0 14 14"><path d="M11.18 5.99 L13.13 6.07 L13.13 7.93 L11.18 8.01 L10.67 9.24 L11.99 10.67 L10.67 11.99 L9.24 10.67 L8.01 11.18 L7.93 13.13 L6.07 13.13 L5.99 11.18 L4.76 10.67 L3.33 11.99 L2.01 10.67 L3.33 9.24 L2.82 8.01 L0.87 7.93 L0.87 6.07 L2.82 5.99 L3.33 4.76 L2.01 3.33 L3.33 2.01 L4.76 3.33 L5.99 2.82 L6.07 0.87 L7.93 0.87 L8.01 2.82 L9.24 3.33 L10.67 2.01 L11.99 3.33 L10.67 4.76 Z" fill="#e8e8e8"/><circle cx="7" cy="7" r="2" fill="#2d2d30"/></svg><div class="r" style="left:1397px;top:116px;width:1371px;height:3px;background:#3f3f46;"></div><div class="r" style="left:1397px;top:119px;width:1371px;height:20px;background:#333337;"></div><div class="r" style="left:1397px;top:138px;width:1371px;height:2px;background:#3f3f46;"></div><div class="r" style="left:1397px;top:119px;width:455px;height:20px;background:#333337;box-sizing:border-box;border:1px solid #3f3f46;"></div><svg style="left:1402px;top:122px" width="16" height="15"><rect x="0.5" y="0.5" width="13" height="13" fill="none" stroke="#c586c0"/><path d="M3 3 h3 v3 h-3 z M7 7 h3 v3 h-3 z" fill="#e0e0e0"/><path d="M4 4 l6 6" stroke="#e0e0e0" stroke-width="1.5"/></svg><div class="t" style="left:1418px;top:121.46px;font-size:12.2px;line-height:17.08px;color:#f1f1f1;font-weight:normal;font-family:'Liberation Sans', sans-serif;letter-spacing:-0.184px;">dialog_annotate.cpp.obj (eeschema\CMakeFiles\eeschema_kiface_objects.dir\d</div><svg style="left:1841px;top:127px" width="8" height="5"><path d="M0 0 H7 L3.5 4 Z" fill="#c8c8c8"/></svg><div class="r" style="left:1855px;top:119px;width:454px;height:20px;background:#333337;box-sizing:border-box;border:1px solid #3f3f46;"></div><svg style="left:1858px;top:122px" width="16" height="15"><path d="M1 7.5 h11 M8 3.5 l4 4 l-4 4" fill="none" stroke="#e0e0e0" stroke-width="1.4"/></svg><div class="t" style="left:1876.5px;top:121.46px;font-size:12.2px;line-height:17.08px;color:#f1f1f1;font-weight:normal;font-family:'Liberation Sans', sans-serif;letter-spacing:-1.248px;">EE_INSPECTION_TOOL</div><svg style="left:2299px;top:127px" width="8" height="5"><path d="M0 0 H7 L3.5 4 Z" fill="#c8c8c8"/></svg><div class="r" style="left:2312px;top:119px;width:456px;height:20px;background:#333337;box-sizing:border-box;border:1px solid #3f3f46;"></div><svg style="left:2316px;top:121px" width="16" height="16" viewBox="0 0 16 16"><path d="M8 2 L13.5 5 V11 L8 14 L2.5 11 V5 Z M2.5 5 L8 8 L13.5 5 M8 8 V14" fill="none" stroke="#b180d7" stroke-width="1.3"/></svg><div class="t" style="left:2333px;top:121.46px;font-size:12.2px;line-height:17.08px;color:#f1f1f1;font-weight:normal;font-family:'Liberation Sans', sans-serif;letter-spacing:-0.427px;">RunSimulation(const TOOL_EVENT &amp; aEvent)</div><svg style="left:2757px;top:127px" width="8" height="5"><path d="M0 0 H7 L3.5 4 Z" fill="#999"/></svg><div class="r" style="left:1397px;top:140px;width:24px;height:552px;background:#333333;"></div><div class="r" style="left:1421px;top:140px;width:1327px;height:552px;background:#1e1e1e;"></div><div class="r" style="left:2748px;top:140px;width:20px;height:552px;background:#3e3e42;"></div><div class="r" style="left:2748px;top:140px;width:20px;height:16px;background:#1e1e1e;"></div><svg style="left:2750px;top:141px" width="16" height="15"><path d="M2 7.5 h12" stroke="#e8e8e8" stroke-width="1.5"/><path d="M8 1 v4 M6 3 l2-2 l2 2 M8 14 v-4 M6 12 l2 2 l2-2" fill="none" stroke="#e8e8e8" stroke-width="1.2"/></svg><svg style="left:2750px;top:160px" width="16" height="10"><path d="M4 8 L8 4 L12 8 Z" fill="#999"/></svg><svg style="left:2750px;top:679px" width="16" height="10"><path d="M4 2 L8 6 L12 2 Z" fill="#999"/></svg><div class="r" style="left:2752px;top:485px;width:11px;height:31px;background:#686868;"></div><div class="r" style="left:2748px;top:515px;width:19px;height:2px;background:#e8e8e8;"></div><div class="r" style="left:1525px;top:668px;width:1221px;height:22px;box-sizing:border-box;border:2px solid #464646;"></div><svg style="left:1500px;top:138px" width="90" height="560" viewBox="1500 138 90 560"><path d="M1518 140 V522.9 H1524 M1518 498.8 H1524" fill="none" stroke="#a5a5a5" stroke-width="1.2"/><path d="M1531 141 V498.3 M1572 162.7 V474.2 M1531 645.1 V692" fill="none" stroke="#7a7a7a" stroke-width="1.2" stroke-dasharray="4.3 4.2" stroke-dashoffset="4.2"/><rect x="1512.5" y="578.3" width="11" height="11" fill="#1e1e1e" stroke="#a5a5a5"/><path d="M1515 583.8 H1521" stroke="#dcdcdc" stroke-width="1.3"/><rect x="1512.5" y="626.5" width="11" height="11" fill="#1e1e1e" stroke="#a5a5a5"/><path d="M1515 632.0 H1521" stroke="#dcdcdc" stroke-width="1.3"/><path d="M1518 589.3 V626.5 M1518 637.5 V692" stroke="#a5a5a5" stroke-width="1.2"/></svg><div class="t" style="right:1504px;top:137.54px;font:16.87px/24.12px 'Liberation Mono',monospace;color:#2b91af">220</div><div class="t" style="left:1567.88px;top:137.54px;font:16.87px/24.12px 'Liberation Mono',monospace"><span style="color:#dcdcdc">{</span></div><div class="t" style="right:1504px;top:161.66px;font:16.87px/24.12px 'Liberation Mono',monospace;color:#2b91af">221</div><div class="t" style="left:1608.36px;top:161.66px;font:16.87px/24.12px 'Liberation Mono',monospace"><span style="color:#4ec9b0">wxColour</span><span style="color:#dcdcdc"> </span><span style="color:#9cdcfe">bgcolor</span><span style="color:#b4b4b4"> = </span><span style="color:#4ec9b0">wxSystemSettings</span><span style="color:#b4b4b4">::</span><span style="color:#dcdcaa">GetColour</span><span style="color:#dcdcdc">( </span><span style="color:#b8d7a3">wxSYS_COLOUR_WINDOW</span><span style="color:#dcdcdc"> );</span></div><div class="t" style="right:1504px;top:185.78px;font:16.87px/24.12px 'Liberation Mono',monospace;color:#2b91af">222</div><div class="t" style="left:1608.36px;top:185.78px;font:16.87px/24.12px 'Liberation Mono',monospace"><span style="color:#4ec9b0">wxColour</span><span style="color:#dcdcdc"> </span><span style="color:#9cdcfe">fgcolor</span><span style="color:#b4b4b4"> = </span><span style="color:#4ec9b0">wxSystemSettings</span><span style="color:#b4b4b4">::</span><span style="color:#dcdcaa">GetColour</span><span style="color:#dcdcdc">( </span><span style="color:#b8d7a3">wxSYS_COLOUR_WINDOWTEXT</span><span style="color:#dcdcdc"> );</span></div><div class="t" style="right:1504px;top:209.90px;font:16.87px/24.12px 'Liberation Mono',monospace;color:#2b91af">223</div><div class="t" style="left:1608.36px;top:209.90px;font:16.87px/24.12px 'Liberation Mono',monospace"><span style="color:#4ec9b0">wxString</span><span style="color:#dcdcdc"> </span><span style="color:#9cdcfe">outmsg</span><span style="color:#b4b4b4"> = </span><span style="color:#4ec9b0">wxString</span><span style="color:#b4b4b4">::</span><span style="color:#dcdcaa">Format</span><span style="color:#dcdcdc">( </span><span style="color:#d69d85">"&lt;html&gt;&lt;body bgcolor='%s' text='%s'&gt;"</span><span style="color:#dcdcdc">,</span></div><div class="t" style="right:1504px;top:234.02px;font:16.87px/24.12px 'Liberation Mono',monospace;color:#2b91af">224</div><div class="t" style="left:1689.32px;top:234.02px;font:16.87px/24.12px 'Liberation Mono',monospace"><span style="color:#9cdcfe">bgcolor</span><span style="color:#dcdcdc">.</span><span style="color:#dcdcaa">GetAsString</span><span style="color:#dcdcdc">( </span><span style="color:#b8d7a3">wxC2S_HTML_SYNTAX</span><span style="color:#dcdcdc"> ),</span></div><div class="t" style="right:1504px;top:258.14px;font:16.87px/24.12px 'Liberation Mono',monospace;color:#2b91af">225</div><div class="t" style="left:1689.32px;top:258.14px;font:16.87px/24.12px 'Liberation Mono',monospace"><span style="color:#9cdcfe">fgcolor</span><span style="color:#dcdcdc">.</span><span style="color:#dcdcaa">GetAsString</span><span style="color:#dcdcdc">( </span><span style="color:#b8d7a3">wxC2S_HTML_SYNTAX</span><span style="color:#dcdcdc"> ) );</span></div><div class="t" style="right:1504px;top:282.26px;font:16.87px/24.12px 'Liberation Mono',monospace;color:#2b91af">226</div><div class="t" style="right:1504px;top:306.38px;font:16.87px/24.12px 'Liberation Mono',monospace;color:#2b91af">227</div><div class="t" style="left:1608.36px;top:306.38px;font:16.87px/24.12px 'Liberation Mono',monospace"><span style="color:#d8a0df">for</span><span style="color:#dcdcdc">( </span><span style="color:#569cd6">auto</span><span style="color:#b4b4b4">&amp;</span><span style="color:#dcdcdc"> </span><span style="color:#9cdcfe">msgPart</span><span style="color:#b4b4b4"> : </span><span style="color:#9cdcfe">messages</span><span style="color:#dcdcdc"> )</span></div><div class="t" style="right:1504px;top:330.50px;font:16.87px/24.12px 'Liberation Mono',monospace;color:#2b91af">228</div><div class="t" style="left:1648.84px;top:330.50px;font:16.87px/24.12px 'Liberation Mono',monospace"><span style="color:#9cdcfe">outmsg</span><span style="color:#b4b4b4"> += </span><span style="color:#9cdcfe">msgPart</span><span style="color:#dcdcdc">;</span></div><div class="t" style="right:1504px;top:354.62px;font:16.87px/24.12px 'Liberation Mono',monospace;color:#2b91af">229</div><div class="t" style="right:1504px;top:378.74px;font:16.87px/24.12px 'Liberation Mono',monospace;color:#2b91af">230</div><div class="t" style="left:1608.36px;top:378.74px;font:16.87px/24.12px 'Liberation Mono',monospace"><span style="color:#9cdcfe">outmsg</span><span style="color:#b4b4b4"> += </span><span style="color:#d69d85">"&lt;/body&gt;&lt;/html&gt;"</span><span style="color:#dcdcdc">;</span></div><div class="t" style="right:1504px;top:402.86px;font:16.87px/24.12px 'Liberation Mono',monospace;color:#2b91af">231</div><div class="t" style="right:1504px;top:426.98px;font:16.87px/24.12px 'Liberation Mono',monospace;color:#2b91af">232</div><div class="t" style="left:1608.36px;top:426.98px;font:16.87px/24.12px 'Liberation Mono',monospace"><span style="color:#9cdcfe">error_display</span><span style="color:#dcdcdc">.</span><span style="color:#dadada">m_htmlWindow</span><span style="color:#b4b4b4">-&gt;</span><span style="color:#dcdcaa">SetPage</span><span style="color:#dcdcdc">( </span><span style="color:#9cdcfe">outmsg</span><span style="color:#dcdcdc"> );</span></div><div class="t" style="right:1504px;top:451.10px;font:16.87px/24.12px 'Liberation Mono',monospace;color:#2b91af">233</div><div class="t" style="left:1608.36px;top:451.10px;font:16.87px/24.12px 'Liberation Mono',monospace"><span style="color:#9cdcfe">error_display</span><span style="color:#dcdcdc">.</span><span style="color:#dcdcaa">ShowModal</span><span style="color:#dcdcdc">();</span></div><div class="t" style="right:1504px;top:475.22px;font:16.87px/24.12px 'Liberation Mono',monospace;color:#2b91af">234</div><div class="t" style="left:1567.88px;top:475.22px;font:16.87px/24.12px 'Liberation Mono',monospace"><span style="color:#dcdcdc">}</span></div><div class="t" style="right:1504px;top:499.34px;font:16.87px/24.12px 'Liberation Mono',monospace;color:#2b91af">235</div><div class="t" style="left:1527.40px;top:499.34px;font:16.87px/24.12px 'Liberation Mono',monospace"><span style="color:#dcdcdc">}</span></div><div class="t" style="right:1504px;top:523.46px;font:16.87px/24.12px 'Liberation Mono',monospace;color:#2b91af">236</div><div class="t" style="right:1504px;top:547.58px;font:16.87px/24.12px 'Liberation Mono',monospace;color:#2b91af">237</div><div class="t" style="right:1504px;top:571.70px;font:16.87px/24.12px 'Liberation Mono',monospace;color:#2b91af">238</div><div class="t" style="left:1527.40px;top:571.70px;font:16.87px/24.12px 'Liberation Mono',monospace"><span style="color:#569cd6">int</span><span style="color:#dcdcdc"> </span><span style="color:#4ec9b0">EE_INSPECTION_TOOL</span><span style="color:#b4b4b4">::</span><span style="color:#dcdcaa">RunSimulation</span><span style="color:#dcdcdc">( </span><span style="color:#569cd6">const</span><span style="color:#dcdcdc"> </span><span style="color:#4ec9b0">TOOL_EVENT</span><span style="color:#b4b4b4">&amp;</span><span style="color:#dcdcdc"> </span><span style="color:#9a9a9a">aEvent</span><span style="color:#dcdcdc"> )</span></div><div class="t" style="right:1504px;top:595.82px;font:16.87px/24.12px 'Liberation Mono',monospace;color:#2b91af">239</div><div class="t" style="left:1527.40px;top:595.82px;font:16.87px/24.12px 'Liberation Mono',monospace"><span style="color:#dcdcdc">{</span></div><div class="t" style="right:1504px;top:619.94px;font:16.87px/24.12px 'Liberation Mono',monospace;color:#2b91af">240</div><div class="t" style="left:1527.40px;top:619.94px;font:16.87px/24.12px 'Liberation Mono',monospace"><span style="color:#9b9b9b">#ifdef</span><span style="color:#dcdcdc"> </span><span style="color:#beb7ff">KICAD_SPICE</span></div><div class="t" style="right:1504px;top:644.06px;font:16.87px/24.12px 'Liberation Mono',monospace;color:#2b91af">241</div><div class="t" style="left:1567.88px;top:644.06px;font:16.87px/24.12px 'Liberation Mono',monospace"><span style="color:#4ec9b0">SIM_PLOT_FRAME</span><span style="color:#b4b4b4">*</span><span style="color:#dcdcdc"> </span><span style="color:#9cdcfe">simFrame</span><span style="color:#b4b4b4"> = </span><span style="color:#dcdcdc">(</span><span style="color:#4ec9b0">SIM_PLOT_FRAME</span><span style="color:#b4b4b4">*</span><span style="color:#dcdcdc">) </span><span style="color:#dadada">m_frame</span><span style="color:#b4b4b4">-&gt;</span><span style="color:#dcdcaa">Kiway</span><span style="color:#dcdcdc">().</span><span style="color:#dcdcaa">Player</span><span style="color:#dcdcdc">( </span><span style="color:#b8d7a3">FRAME_SIMULATOR</span><span style="color:#dcdcdc">, </span><span style="color:#569cd6">true</span><span style="color:#dcdcdc"> );</span></div><div class="t" style="right:1504px;top:668.18px;font:16.87px/24.12px 'Liberation Mono',monospace;color:#2b91af">242</div><div class="t" style="left:1567.88px;top:668.18px;font:16.87px/24.12px 'Liberation Mono',monospace"><span style="color:#9cdcfe">simFrame</span><span style="color:#b4b4b4">-&gt;</span><span style="color:#dcdcaa">Show</span><span style="color:#dcdcdc">( </span><span style="color:#569cd6">true</span><span style="color:#dcdcdc"> );</span></div><div class="r" style="left:1397px;top:692px;width:1371px;height:18px;background:#333337;"></div><div class="r" style="left:1397px;top:692px;width:1371px;height:1px;background:#3f3f46;"></div><div class="r" style="left:1397px;top:693px;width:59px;height:16px;background:#333337;box-sizing:border-box;border:1px solid #3f3f46;"></div><div class="t" style="left:1399px;top:693.45px;font-size:11.5px;line-height:16.10px;color:#f1f1f1;font-weight:normal;font-family:'Liberation Sans', sans-serif;letter-spacing:-0.727px;">142 %</div><svg style="left:1446px;top:699px" width="8" height="5"><path d="M0 0 H7 L3.5 4 Z" fill="#c8c8c8"/></svg><svg style="left:1479px;top:694px" width="14" height="14" viewBox="0 0 14 14"><circle cx="7" cy="7" r="6" fill="#388a34"/><circle cx="7" cy="7" r="4.6" fill="#1e1e1e"/><circle cx="7" cy="7" r="4" fill="#89d185"/><path d="M4.5 7 l2 2 l3.5 -4" fill="none" stroke="#1e1e1e" stroke-width="1.4"/></svg><div class="t" style="left:1497px;top:693.24px;font-size:11.8px;line-height:16.52px;color:#f1f1f1;font-weight:normal;font-family:'Liberation Sans', sans-serif;letter-spacing:-0.073px;">No issues found</div><svg style="left:1654px;top:696px" width="10" height="10"><path d="M7 1 L3 5 L7 9 Z" fill="#999"/></svg><div class="r" style="left:1667px;top:697px;width:841px;height:8px;background:#686868;"></div><svg style="left:2557px;top:696px" width="10" height="10"><path d="M3 1 L7 5 L3 9 Z" fill="#999"/></svg><div class="t" style="left:2594px;top:693.24px;font-size:11.8px;line-height:16.52px;color:#f1f1f1;font-weight:normal;font-family:'Liberation Sans', sans-serif;letter-spacing:-0.578px;">Ln: 242</div><div class="t" style="left:2649px;top:693.24px;font-size:11.8px;line-height:16.52px;color:#f1f1f1;font-weight:normal;font-family:'Liberation Sans', sans-serif;letter-spacing:-0.751px;">Ch: 1</div><div class="t" style="left:2693px;top:693.24px;font-size:11.8px;line-height:16.52px;color:#f1f1f1;font-weight:normal;font-family:'Liberation Sans', sans-serif;letter-spacing:-2.832px;">SPC</div><div class="t" style="left:2732px;top:693.24px;font-size:11.8px;line-height:16.52px;color:#f1f1f1;font-weight:normal;font-family:'Liberation Sans', sans-serif;letter-spacing:-2.138px;">CRLF</div><div class="r" style="left:1397px;top:716px;width:502px;height:250px;background:#29292c;box-sizing:border-box;border:1px solid #3f3f46;"></div><div class="t" style="left:1401.5px;top:719.96px;font-size:12.2px;line-height:17.08px;color:#f1f1f1;font-weight:normal;font-family:'Liberation Sans', sans-serif;letter-spacing:-0.513px;">Locals</div><div class="r" style="left:1447px;top:724px;width:386px;height:6px;background-image:radial-gradient(#4a4a4e 0.6px, transparent 0.8px);background-size:3px 3px;"></div><svg style="left:1851px;top:725px" width="8" height="5"><path d="M0 0 H7 L3.5 4 Z" fill="#e0e0e0"/></svg><svg style="left:1866px;top:720px" width="30" height="16"><path d="M4 2 h6 M5 2 v6 M9 2 v6 M3 8 h8 M7 8 v6" fill="none" stroke="#e0e0e0" stroke-width="1.3"/><path d="M17 3 l9 9 M26 3 l-9 9" stroke="#e0e0e0" stroke-width="1.4"/></svg><div class="r" style="left:1398px;top:740px;width:224px;height:20px;background:#333337;box-sizing:border-box;border:1px solid #3f3f46;"></div><div class="t" style="left:1402px;top:742.60px;font-size:12px;line-height:16.80px;color:#999999;font-weight:normal;font-family:'Liberation Sans', sans-serif;letter-spacing:-0.316px;">Search (Ctrl+E)</div><svg style="left:1593px;top:742px" width="30" height="16"><circle cx="10" cy="6" r="3.8" fill="none" stroke="#f0f0f0" stroke-width="1.8"/><path d="M7.5 8.5 L3 13" stroke="#f0f0f0" stroke-width="2.2"/></svg><div class="r" style="left:1610px;top:741px;width:11px;height:18px;background:#3f3f46;"></div><svg style="left:1611px;top:748px" width="8" height="5"><path d="M0 0 H7 L3.5 4 Z" fill="#f0f0f0"/></svg><svg style="left:1626px;top:742px" width="40" height="16"><path d="M3 8 h11 M7 4 l-4 4 l4 4 M25 8 h11 M32 4 l4 4 l-4 4" fill="none" stroke="#6a6a6a" stroke-width="1.5"/></svg><div class="t" style="left:1673px;top:743.60px;font-size:12px;line-height:16.80px;color:#6d6d6d;font-weight:normal;font-family:'Liberation Sans', sans-serif;letter-spacing:-0.368px;">Search Depth:</div><div class="r" style="left:1752px;top:741px;width:40px;height:19px;box-sizing:border-box;border:1px solid #3f3f46;"></div><div class="t" style="left:1756px;top:743.60px;font-size:12px;line-height:16.80px;color:#6d6d6d;font-weight:normal;font-family:'Liberation Sans', sans-serif;">3</div><svg style="left:1781px;top:749px" width="8" height="5"><path d="M0 0 H7 L3.5 4 Z" fill="#555"/></svg><div class="r" style="left:1398px;top:783px;width:483px;height:1px;background:#2d2d30;"></div><div class="r" style="left:1405px;top:761px;width:1px;height:22px;background:#2d2d30;"></div><div class="r" style="left:1563px;top:761px;width:1px;height:22px;background:#2d2d30;"></div><div class="r" style="left:1801px;top:761px;width:1px;height:22px;background:#2d2d30;"></div><div class="t" style="left:1411px;top:765.60px;font-size:12px;line-height:16.80px;color:#8c8c8c;font-weight:normal;font-family:'Liberation Sans', sans-serif;letter-spacing:-0.237px;">Name</div><div class="t" style="left:1569px;top:765.60px;font-size:12px;line-height:16.80px;color:#8c8c8c;font-weight:normal;font-family:'Liberation Sans', sans-serif;letter-spacing:-0.201px;">Value</div><div class="t" style="left:1808px;top:765.60px;font-size:12px;line-height:16.80px;color:#8c8c8c;font-weight:normal;font-family:'Liberation Sans', sans-serif;letter-spacing:-0.639px;">Type</div><div class="r" style="left:1881px;top:761px;width:17px;height:205px;background:#3e3e42;"></div><svg style="left:1883px;top:770px" width="14" height="8"><path d="M2 6 L7 1 L12 6 Z" fill="#555"/></svg><div class="r" style="left:1905px;top:716px;width:863px;height:250px;background:#29292c;box-sizing:border-box;border:1px solid #3f3f46;"></div><div class="t" style="left:1909.5px;top:719.96px;font-size:12.2px;line-height:17.08px;color:#f1f1f1;font-weight:normal;font-family:'Liberation Sans', sans-serif;letter-spacing:-0.435px;">Call Stack</div><div class="r" style="left:1981px;top:724px;width:721px;height:6px;background-image:radial-gradient(#4a4a4e 0.6px, transparent 0.8px);background-size:3px 3px;"></div><svg style="left:2720px;top:725px" width="8" height="5"><path d="M0 0 H7 L3.5 4 Z" fill="#e0e0e0"/></svg><svg style="left:2735px;top:720px" width="30" height="16"><path d="M4 2 h6 M5 2 v6 M9 2 v6 M3 8 h8 M7 8 v6" fill="none" stroke="#e0e0e0" stroke-width="1.3"/><path d="M17 3 l9 9 M26 3 l-9 9" stroke="#e0e0e0" stroke-width="1.4"/></svg><div class="r" style="left:1906px;top:757px;width:844px;height:1px;background:#2d2d30;"></div><div class="r" style="left:1922px;top:739px;width:1px;height:18px;background:#2d2d30;"></div><div class="r" style="left:2720px;top:739px;width:1px;height:18px;background:#2d2d30;"></div><div class="t" style="left:1928px;top:740.60px;font-size:12px;line-height:16.80px;color:#8c8c8c;font-weight:normal;font-family:'Liberation Sans', sans-serif;letter-spacing:-0.17px;">Name</div><div class="t" style="left:2726px;top:740.60px;font-size:12px;line-height:16.80px;color:#8c8c8c;font-weight:normal;font-family:'Liberation Sans', sans-serif;letter-spacing:-0.899px;">Lang</div><div class="r" style="left:2750px;top:739px;width:17px;height:227px;background:#3e3e42;"></div><svg style="left:2752px;top:744px" width="14" height="8"><path d="M2 6 L7 1 L12 6 Z" fill="#555"/></svg><div class="r" style="left:2774px;top:97px;width:182px;height:869px;background:#252526;box-sizing:border-box;border:1px solid #3f3f46;"></div><div class="r" style="left:2776px;top:98px;width:179px;height:48px;background:#2d2d30;"></div><div class="t" style="left:2780px;top:101.46px;font-size:12.2px;line-height:17.08px;color:#f1f1f1;font-weight:normal;font-family:'Liberation Sans', sans-serif;letter-spacing:-0.241px;">Diagnostic Tools</div><div class="r" style="left:2870px;top:106px;width:28px;height:6px;background-image:radial-gradient(#4a4a4e 0.6px, transparent 0.8px);background-size:3px 3px;"></div><svg style="left:2912px;top:106px" width="8" height="5"><path d="M0 0 H7 L3.5 4 Z" fill="#e0e0e0"/></svg><svg style="left:2920px;top:101px" width="34" height="16"><path d="M5 2 h6 M6 2 v6 M10 2 v6 M4 8 h8 M8 8 v6" fill="none" stroke="#e0e0e0" stroke-width="1.3"/><path d="M20 3 l9 9 M29 3 l-9 9" stroke="#e0e0e0" stroke-width="1.4"/></svg><svg style="left:2776px;top:120px" width="180" height="26" viewBox="2776 120 180 26">
<path d="M2798.83 130.59 L2800.91 130.80 L2800.91 133.20 L2798.83 133.41 L2798.12 135.12 L2799.44 136.74 L2797.74 138.44 L2796.12 137.12 L2794.41 137.83 L2794.20 139.91 L2791.80 139.91 L2791.59 137.83 L2789.88 137.12 L2788.26 138.44 L2786.56 136.74 L2787.88 135.12 L2787.17 133.41 L2785.09 133.20 L2785.09 130.80 L2787.17 130.59 L2787.88 128.88 L2786.56 127.26 L2788.26 125.56 L2789.88 126.88 L2791.59 126.17 L2791.80 124.09 L2794.20 124.09 L2794.41 126.17 L2796.12 126.88 L2797.74 125.56 L2799.44 127.26 L2798.12 128.88 Z" fill="none" stroke="#e8e8e8" stroke-width="1.3" stroke-linejoin="round"/><circle cx="2793" cy="132" r="2.6" fill="none" stroke="#e8e8e8" stroke-width="1.3"/>
<rect x="2811" y="123" width="1" height="20" fill="#3f3f46"/>
<path d="M2820 125 h8 v3 M2820 125 v15 h8 v-3 M2822 127 v11" fill="none" stroke="#e8e8e8" stroke-width="1.2"/><path d="M2825 130 h5 v-3 l4 5 l-4 5 v-3 h-5 z" fill="#1c97ea"/>
<rect x="2845" y="123" width="1" height="20" fill="#3f3f46"/>
<circle cx="2859" cy="130" r="4.2" fill="none" stroke="#e8e8e8" stroke-width="1.4"/><path d="M2862 133 l4 4" stroke="#e8e8e8" stroke-width="2.2"/><path d="M2857 130 h4 M2859 128 v4" stroke="#1c97ea" stroke-width="1.3"/>
<circle cx="2885" cy="130" r="4.2" fill="none" stroke="#e8e8e8" stroke-width="1.4"/><path d="M2888 133 l4 4" stroke="#e8e8e8" stroke-width="2.2"/><path d="M2883 130 h4" stroke="#1c97ea" stroke-width="1.3"/>
<path d="M2904 141 v-8 h3 v8 M2909 141 v-11 h3 v11 M2914 141 v-6 h3 v6 M2904 141 h14" fill="none" stroke="#e8e8e8" stroke-width="1.1"/><path d="M2903 126 q2-3 4 0 q0 2-2 3" fill="none" stroke="#e8e8e8" stroke-width="1.1"/>
</svg><div class="r" style="left:2776px;top:146px;width:179px;height:21px;background:#1e1e1e;"></div><div class="t" style="left:2785px;top:147.96px;font-size:12.2px;line-height:17.08px;color:#f1f1f1;font-weight:bold;font-family:'Liberation Sans', sans-serif;letter-spacing:-0.693px;">Diagnostics session: 7 seconds</div><div class="r" style="left:2776px;top:167px;width:179px;height:1px;background:#3f3f46;"></div><div class="r" style="left:2776px;top:168px;width:179px;height:22px;background:#252526;"></div><div class="r" style="left:2807px;top:168px;width:5px;height:22px;background:#e8e8e8;"></div><div class="r" style="left:2919px;top:168px;width:5px;height:22px;background:#e8e8e8;"></div><div class="r" style="left:2832px;top:184px;width:1px;height:5px;background:#5a5a5a;"></div><div class="r" style="left:2851px;top:184px;width:1px;height:5px;background:#5a5a5a;"></div><div class="r" style="left:2871px;top:184px;width:1px;height:5px;background:#5a5a5a;"></div><div class="r" style="left:2890px;top:184px;width:1px;height:5px;background:#5a5a5a;"></div><div class="r" style="left:2910px;top:184px;width:1px;height:5px;background:#5a5a5a;"></div><div class="r" style="left:2776px;top:190px;width:179px;height:1px;background:#3f3f46;"></div><svg style="left:2780px;top:197px" width="10" height="10"><path d="M1 9 H9 V1 Z" fill="#c8c8c8"/></svg><div class="t" style="left:2792px;top:193.46px;font-size:12.2px;line-height:17.08px;color:#f1f1f1;font-weight:bold;font-family:'Liberation Sans', sans-serif;letter-spacing:-1.002px;">Events</div><svg style="left:2792px;top:214px" width="14" height="14"><rect x="1.5" y="1.5" width="10" height="10" fill="none" stroke="#e8e8e8" stroke-width="1.3"/><path d="M6.5 1.5 v10" stroke="#e8e8e8" stroke-width="1.3"/></svg><div class="r" style="left:2811px;top:211px;width:108px;height:23px;box-sizing:border-box;border:1px solid #434346;"></div><svg style="left:2780px;top:240px" width="10" height="10"><path d="M1 9 H9 V1 Z" fill="#c8c8c8"/></svg><div class="t" style="left:2792px;top:236.46px;font-size:12.2px;line-height:17.08px;color:#f1f1f1;font-weight:bold;font-family:'Liberation Sans', sans-serif;letter-spacing:-0.563px;">Process Memory (MB)</div><svg style="left:2910px;top:238px" width="10" height="14"><path d="M2 1 a6 6 0 0 1 0 12 z" fill="#5b9bd5"/></svg><div class="r" style="left:2811px;top:254px;width:108px;height:69px;box-sizing:border-box;border:1px solid #434346;"></div><svg style="left:2811px;top:254px" width="108" height="69"><path d="M2 68 L7 48 L14 38 L20 7 L40 6 L58 5 L70 5 V68 Z" fill="#5a7f91"/></svg><div class="t" style="left:2787px;top:254.60px;font-size:12px;line-height:16.80px;color:#f1f1f1;font-weight:normal;font-family:'Liberation Sans', sans-serif;letter-spacing:-0.511px;">229</div><div class="t" style="left:2924.5px;top:254.60px;font-size:12px;line-height:16.80px;color:#f1f1f1;font-weight:normal;font-family:'Liberation Sans', sans-serif;letter-spacing:-0.511px;">229</div><div class="t" style="left:2799px;top:308.60px;font-size:12px;line-height:16.80px;color:#f1f1f1;font-weight:normal;font-family:'Liberation Sans', sans-serif;">0</div><div class="t" style="left:2924.5px;top:308.60px;font-size:12px;line-height:16.80px;color:#f1f1f1;font-weight:normal;font-family:'Liberation Sans', sans-serif;">0</div><svg style="left:2780px;top:330px" width="10" height="10"><path d="M1 9 H9 V1 Z" fill="#c8c8c8"/></svg><div class="t" style="left:2792px;top:326.46px;font-size:12.2px;line-height:17.08px;color:#f1f1f1;font-weight:bold;font-family:'Liberation Sans', sans-serif;letter-spacing:-0.59px;">CPU (% of all processors)</div><div class="r" style="left:2811px;top:344px;width:108px;height:70px;box-sizing:border-box;border:1px solid #434346;"></div><svg style="left:2811px;top:344px" width="108" height="70"><path d="M2 68 L6 66 L12 65 L18 67 L22 66 L28 67 L36 65 L42 67 L48 66 L52 64 L58 67 L70 67 V69 H2 Z" fill="#5a7f91"/></svg><div class="t" style="left:2787.5px;top:344.60px;font-size:12px;line-height:16.80px;color:#f1f1f1;font-weight:normal;font-family:'Liberation Sans', sans-serif;letter-spacing:-0.761px;">100</div><div class="t" style="left:2925px;top:344.60px;font-size:12px;line-height:16.80px;color:#f1f1f1;font-weight:normal;font-family:'Liberation Sans', sans-serif;letter-spacing:-0.761px;">100</div><div class="t" style="left:2799px;top:398.60px;font-size:12px;line-height:16.80px;color:#f1f1f1;font-weight:normal;font-family:'Liberation Sans', sans-serif;">0</div><div class="t" style="left:2924.5px;top:398.60px;font-size:12px;line-height:16.80px;color:#f1f1f1;font-weight:normal;font-family:'Liberation Sans', sans-serif;">0</div><div class="r" style="left:2776px;top:433px;width:179px;height:2px;background:#3f3f46;"></div><div class="r" style="left:2776px;top:435px;width:179px;height:5px;background:#2d2d30;"></div><div class="r" style="left:2776px;top:440px;width:179px;height:18px;background:#252526;"></div><div class="t" style="left:2785px;top:441.60px;font-size:12px;line-height:16.80px;color:#f1f1f1;font-weight:normal;font-family:'Liberation Sans', sans-serif;letter-spacing:-0.157px;">Summary</div><div class="t" style="left:2848px;top:441.60px;font-size:12px;line-height:16.80px;color:#f1f1f1;font-weight:normal;font-family:'Liberation Sans', sans-serif;letter-spacing:-0.537px;">Events</div><div class="r" style="left:2888px;top:440px;width:40px;height:18px;background:#3e3e42;"></div><div class="t" style="left:2894px;top:441.60px;font-size:12px;line-height:16.80px;color:#f1f1f1;font-weight:normal;font-family:'Liberation Sans', sans-serif;letter-spacing:-0.78px;">Memo</div><svg style="left:2930px;top:444px" width="25" height="12"><path d="M7 1 L2 6 L7 11 Z M15 1 L20 6 L15 11 Z" fill="#e0e0e0"/></svg><div class="r" style="left:2776px;top:458px;width:179px;height:30px;background:#3f3f46;"></div><svg style="left:2776px;top:458px" width="179" height="30"><path d="M9 11 h4 l1-2 h4 l1 2 h4 v9 h-14 z" fill="#5a5a5a"/><circle cx="16" cy="15.5" r="2.5" fill="#3f3f46"/>
<circle cx="36" cy="13" r="4" fill="none" stroke="#5a5a5a" stroke-width="1.6"/><path d="M33 16 l-4 4" stroke="#5a5a5a" stroke-width="2"/>
<path d="M49 9 l10 10 M59 9 l-10 10" stroke="#5a5a5a" stroke-width="1.8"/>
<rect x="163" y="11" width="12" height="8" fill="none" stroke="#e0e0e0" stroke-width="1.6"/><path d="M165 9 v2 M168 9 v2 M171 9 v2 M165 19 v2 M168 19 v2 M171 19 v2 M166 14 v2 M169 14 v2 M172 14 v2" stroke="#e0e0e0" stroke-width="1"/></svg><div class="r" style="left:2776px;top:488px;width:179px;height:23px;background:#252526;"></div><div class="r" style="left:2776px;top:510px;width:179px;height:1px;background:#3f3f46;"></div><div class="r" style="left:2800px;top:488px;width:1px;height:22px;background:#3f3f46;"></div><div class="r" style="left:2834px;top:488px;width:1px;height:22px;background:#3f3f46;"></div><div class="r" style="left:2932px;top:488px;width:1px;height:22px;background:#3f3f46;"></div><div class="t" style="left:2781px;top:491.10px;font-size:12px;line-height:16.80px;color:#f1f1f1;font-weight:normal;font-family:'Liberation Sans', sans-serif;letter-spacing:-0.2px;">ID</div><div class="t" style="left:2804.6px;top:491.10px;font-size:12px;line-height:16.80px;color:#f1f1f1;font-weight:normal;font-family:'Liberation Sans', sans-serif;letter-spacing:-0.207px;">Time</div><div class="t" style="left:2839.3px;top:491.10px;font-size:12px;line-height:16.80px;color:#f1f1f1;font-weight:normal;font-family:'Liberation Sans', sans-serif;letter-spacing:0.05px;">Allocations (Diff)</div><div class="t" style="left:2937px;top:491.10px;font-size:12px;line-height:16.80px;color:#f1f1f1;font-weight:normal;font-family:'Liberation Sans', sans-serif;letter-spacing:-0.2px;">Hea</div><div class="t" style="left:2814.4px;top:711.70px;font-size:12px;line-height:16.80px;color:#f1f1f1;font-weight:normal;font-family:'Liberation Sans', sans-serif;letter-spacing:0.143px;">Heap profiling with</div><div class="t" style="left:2808.4px;top:726.80px;font-size:12px;line-height:16.80px;color:#f1f1f1;font-weight:normal;font-family:'Liberation Sans', sans-serif;letter-spacing:-0.213px;">snapshots is disabled.</div><div class="t" style="left:2794px;top:760.00px;font-size:12px;line-height:16.80px;color:#f1f1f1;font-weight:normal;font-family:'Liberation Sans', sans-serif;letter-spacing:-0.041px;">for this debugging session.</div><div class="t" style="left:2814.7px;top:774.90px;font-size:12px;line-height:16.80px;color:#f1f1f1;font-weight:normal;font-family:'Liberation Sans', sans-serif;letter-spacing:0.002px;">This will impact the</div><div class="t" style="left:2793.2px;top:789.80px;font-size:12px;line-height:16.80px;color:#f1f1f1;font-weight:normal;font-family:'Liberation Sans', sans-serif;letter-spacing:-0.051px;">performance of the process</div><div class="t" style="left:2820.5px;top:804.80px;font-size:12px;line-height:16.80px;color:#f1f1f1;font-weight:normal;font-family:'Liberation Sans', sans-serif;letter-spacing:-0.009px;">being debugged.</div><div style="position:absolute;left:2786px;top:741px;width:157px;height:18px;overflow:hidden"><div class="t" style="left:0.9px;top:0.70px;font-size:12px;line-height:16.80px;color:#3794ff;font-weight:normal;font-family:'Liberation Sans', sans-serif;letter-spacing:-0.098px;">Enable snapshots to begin heap profiling</div></div><div class="r" style="left:2956px;top:97px;width:7px;height:869px;background:#2d2d30;"></div><div class="r" style="left:2963px;top:97px;width:13px;height:869px;background:#252526;"></div><div class="r" style="left:2963px;top:97px;width:1px;height:869px;background:#3f3f46;"></div><div class="r" style="left:2963px;top:97px;width:13px;height:22px;background:#007acc;"></div><div class="t" style="left:2965px;top:99.96px;font-size:12.2px;line-height:17.08px;color:#ffffff;font-weight:normal;font-family:'Liberation Sans', sans-serif;">So</div><div class="r" style="left:2964px;top:122px;width:12px;height:24px;background:#2d2d30;"></div><svg style="left:2964px;top:124px" width="12" height="20"><circle cx="12" cy="10" r="6" fill="none" stroke="#5a5a5a" stroke-width="2.5"/></svg><div class="r" style="left:2964px;top:146px;width:12px;height:22px;background:#333337;box-sizing:border-box;border:1px solid #3f3f46;border-right:none;"></div><div class="t" style="left:2966px;top:149.10px;font-size:12px;line-height:16.80px;color:#8c8c8c;font-weight:normal;font-family:'Liberation Sans', sans-serif;">Se</div><div class="r" style="left:2964px;top:800px;width:12px;height:18px;background:#3e3e42;"></div><div class="r" style="left:131px;top:273px;width:486px;height:393px;box-shadow:0 4px 18px rgba(0,0,0,0.28);background:#f0f0f0"></div><div class="r" style="left:131px;top:273px;width:486px;height:51px;background:#ffffff;"></div><div class="r" style="left:131px;top:323px;width:486px;height:1px;background:#f5f5f5;"></div><div class="r" style="left:131px;top:324px;width:486px;height:1px;background:#a0a0a0;"></div><div class="r" style="left:131px;top:273px;width:486px;height:393px;box-sizing:border-box;border:1px solid #6e6e6e;"></div><svg style="left:140px;top:280px" width="17" height="17" viewBox="0 0 17 17"><rect x="0.5" y="0.5" width="15.5" height="15.5" rx="2" fill="#0a1a0a"/><path d="M1 10 h15 M1 5 h15 M5 1 v15 M10 1 v15" stroke="#1d3a1d" stroke-width="0.6"/><path d="M2 9 C3.5 0 6 0 7.5 8 S12 16 14.5 6" fill="none" stroke="#22e022" stroke-width="1.3"/></svg><div class="t" style="left:161px;top:281.10px;font-size:12px;line-height:16.80px;color:#000000;font-weight:normal;font-family:'Liberation Sans', sans-serif;letter-spacing:-0.181px;">Spice Simulator</div><svg style="left:490px;top:278px" width="120" height="20" viewBox="490 278 120 20">
<path d="M497 288.5 H507" stroke="#111" stroke-width="1.2"/>
<rect x="542.5" y="283.5" width="9" height="9" fill="none" stroke="#111" stroke-width="1.1"/>
<path d="M588 283 L598 293 M598 283 L588 293" stroke="#111" stroke-width="1.1"/>
</svg><div class="t" style="left:139.6px;top:306.10px;font-size:12px;line-height:16.80px;color:#000000;font-weight:normal;font-family:'Liberation Sans', sans-serif;letter-spacing:-0.112px;">File</div><div class="t" style="left:171.2px;top:306.10px;font-size:12px;line-height:16.80px;color:#000000;font-weight:normal;font-family:'Liberation Sans', sans-serif;letter-spacing:0.052px;">Simulation</div><div class="t" style="left:241.5px;top:306.10px;font-size:12px;line-height:16.80px;color:#000000;font-weight:normal;font-family:'Liberation Sans', sans-serif;letter-spacing:-0.265px;">View</div><svg style="left:131px;top:325px" width="486" height="36" viewBox="131 325 486 36">
<path d="M179 330 L200.5 342 L179 354.2 Z" fill="#008d3a"/>
<path d="M297 354 V331 M294.5 334 L297 330 L299.5 334 M295 352 H319 M316 349.5 L320 352 L316 354.5" fill="none" stroke="#222" stroke-width="1.2"/>
<path d="M298 345 q1.5-10 3 -2 q1.5 8 3 2 q1.5-6 3 -1 q1.5 5 3 0 q1.5-4 3 0 q1.5 3 3 -1" fill="none" stroke="#555" stroke-width="0.9"/>
<text x="303" y="337" font-family="Liberation Serif" font-size="9" font-weight="bold" fill="#ee2222">V(t)</text>
<path d="M412 353 L418 346 L427 333 Q430 329 432 332 L421 349 Z" fill="#241a78"/><path d="M430 333 Q437 326 434 338 Q430 352 438 352" fill="none" stroke="#241a78" stroke-width="0.8"/>
<path d="M529 352 Q530 345 536 344 L540 347 Q537 353 529 353 Z M537 345 L551 331" fill="#241a78" stroke="#241a78" stroke-width="2"/>
</svg><div class="t" style="left:135.4px;top:356.20px;font-size:12px;line-height:16.80px;color:#000000;font-weight:normal;font-family:'Liberation Sans', sans-serif;letter-spacing:-0.022px;">Run/Stop Simulation</div><div class="t" style="left:276.4px;top:356.20px;font-size:12px;line-height:16.80px;color:#000000;font-weight:normal;font-family:'Liberation Sans', sans-serif;letter-spacing:-0.255px;">Add Signals</div><div class="t" style="left:408.2px;top:356.20px;font-size:12px;line-height:16.80px;color:#000000;font-weight:normal;font-family:'Liberation Sans', sans-serif;letter-spacing:-0.256px;">Probe</div><div class="t" style="left:528.7px;top:356.20px;font-size:12px;line-height:16.80px;color:#000000;font-weight:normal;font-family:'Liberation Sans', sans-serif;letter-spacing:-0.536px;">Tune</div><div class="r" style="left:134.5px;top:377.5px;width:85px;height:23px;background:#ffffff;box-sizing:border-box;border:1px solid #d9d9d9;border-bottom:none;"></div><div class="t" style="left:140.2px;top:381.20px;font-size:12px;line-height:16.80px;color:#000000;font-weight:normal;font-family:'Liberation Sans', sans-serif;letter-spacing:-0.161px;">Welcome!</div><svg style="left:202px;top:383px" width="11" height="11"><path d="M1.5 1.5 L9.5 9.5 M9.5 1.5 L1.5 9.5" stroke="#808080" stroke-width="1.8"/></svg><div class="r" style="left:133px;top:400px;width:276px;height:161px;background:#ffffff;box-sizing:border-box;border:1px solid #e6e6e6;"></div><div class="r" style="left:137px;top:401.5px;width:270.5px;height:155px;background:#f0f0f0;"></div><div class="r" style="left:135.5px;top:399px;width:83px;height:2.5px;background:#ffffff;"></div><div class="t" style="left:416.4px;top:381.70px;font-size:12px;line-height:16.80px;color:#000000;font-weight:normal;font-family:'Liberation Sans', sans-serif;letter-spacing:-0.46px;">Signals</div><div class="r" style="left:415.8px;top:402px;width:200px;height:118px;background:#ffffff;box-sizing:border-box;border:1px solid #a0a0a0;"></div><div class="t" style="left:416.3px;top:529.20px;font-size:12px;line-height:16.80px;color:#000000;font-weight:normal;font-family:'Liberation Sans', sans-serif;letter-spacing:-0.368px;">Cursors</div><div class="r" style="left:415.8px;top:550px;width:200px;height:11px;background:#ffffff;box-sizing:border-box;border:1px solid #a0a0a0;"></div><div class="t" style="left:416.3px;top:570.50px;font-size:12px;line-height:16.80px;color:#000000;font-weight:normal;font-family:'Liberation Sans', sans-serif;letter-spacing:-0.536px;">Tune</div><div class="r" style="left:131.5px;top:564.5px;width:280.5px;height:101px;background:#f0f0f0;box-sizing:border-box;border:1px solid #828282;"></div><div class="r" style="left:133px;top:566px;width:261px;height:81px;background:#ffffff;"></div><svg style="left:131px;top:564px" width="282" height="102" viewBox="131 564 282 102">
<path d="M398.5 578.5 L402.5 574.5 L406.5 578.5" fill="none" stroke="#bdbdbd" stroke-width="1.4"/>
<path d="M398.5 637 L402.5 641 L406.5 637" fill="none" stroke="#bdbdbd" stroke-width="1.4"/>
<path d="M146 652 L142 656 L146 660 M383 652 L387 656 L383 660" fill="none" stroke="#bdbdbd" stroke-width="1.4"/>
</svg><svg style="left:349px;top:295px" width="14" height="22" viewBox="0 0 14 22"><path d="M1 1 V17 L5 13.5 L8 20 L10.5 19 L7.5 12.5 L12.5 12.5 Z" fill="#fff" stroke="#000" stroke-width="1"/></svg><svg style="left:0;top:41px" width="600" height="41" viewBox="0 41 600 41"><circle cx="20" cy="61.7" r="8" fill="none" stroke="#333333" stroke-width="2"/><path d="M26 67.7 L31 72.7" stroke="#333333" stroke-width="3.2" stroke-linecap="round"/><path d="M15.5 61.7 H24.5 M20 57.2 V66.2" stroke="#333333" stroke-width="2"/><circle cx="56.8" cy="61.7" r="8" fill="none" stroke="#333333" stroke-width="2"/><path d="M62.8 67.7 L67.8 72.7" stroke="#333333" stroke-width="3.2" stroke-linecap="round"/><path d="M52.3 61.7 H61.3" stroke="#333333" stroke-width="2"/><circle cx="94.1" cy="61.7" r="8" fill="none" stroke="#333333" stroke-width="2"/><path d="M100.1 67.7 L105.1 72.7" stroke="#333333" stroke-width="3.2" stroke-linecap="round"/><rect x="89.7" y="57.3" width="8.8" height="8.8" fill="none" stroke="#666" stroke-width="1.2"/><rect x="129.5" y="49.5" width="14.5" height="14" fill="#cfcfcf" stroke="#333333" stroke-width="1" stroke-dasharray="2 1.5"/><circle cx="131" cy="61.7" r="8" fill="none" stroke="#333333" stroke-width="2"/><path d="M137 67.7 L142 72.7" stroke="#333333" stroke-width="3.2" stroke-linecap="round"/><rect x="154" y="47" width="1" height="31" fill="#8a8a8a"/><rect x="236" y="47" width="1" height="31" fill="#8a8a8a"/><rect x="355" y="47" width="1" height="31" fill="#8a8a8a"/><rect x="548" y="47" width="1" height="31" fill="#8a8a8a"/><rect x="164.5" y="50.5" width="23" height="6" rx="1" fill="#f8f8f8" stroke="#6a6a6a" stroke-width="1.1"/><rect x="170.5" y="60" width="17" height="5.5" rx="1" fill="#f8f8f8" stroke="#6a6a6a" stroke-width="1.1"/><rect x="170.5" y="69" width="17" height="5.5" rx="1" fill="#f8f8f8" stroke="#6a6a6a" stroke-width="1.1"/><path d="M166.3 56.5 V71.8 H170.5 M166.3 62.7 H170.5" fill="none" stroke="#444" stroke-width="1.1"/><rect x="201.3" y="50.5" width="23" height="6" rx="1" fill="#f8f8f8" stroke="#6a6a6a" stroke-width="1.1"/><rect x="207.3" y="60" width="17" height="5.5" rx="1" fill="#f8f8f8" stroke="#6a6a6a" stroke-width="1.1"/><rect x="207.3" y="69" width="17" height="5.5" rx="1" fill="#f8f8f8" stroke="#6a6a6a" stroke-width="1.1"/><path d="M203.10000000000002 56.5 V71.8 H207.3 M203.10000000000002 62.7 H207.3" fill="none" stroke="#444" stroke-width="1.1"/><path d="M204 53 V61.5 Q204 63 206 63 H216" fill="none" stroke="#dd0000" stroke-width="1.8"/><path d="M200.5 57 L204 51 L207.5 57 Z" fill="#dd0000"/><circle cx="216" cy="63" r="2" fill="#dd0000"/><path d="M246.5 56.9 H251 M246.5 66.7 H251 M266 62 H269" stroke="#a00000" stroke-width="1.1"/><path d="M251.5 52 L266.5 62 L251.5 71.8 Z" fill="#f5e4c3" stroke="#a00000" stroke-width="1.3"/><path d="M254 57.5 h3 M254 64.5 h3 M255.5 63 v3" stroke="#a00000" stroke-width="1"/><rect x="284.3" y="51.3" width="5" height="21.4" fill="#dd1111"/><rect x="289.4" y="51.3" width="6" height="21.4" fill="#11aa22"/><path d="M295.5 54 L300 51.5 L306 72 L300 72.7 Z" fill="#4a8ae8"/><circle cx="293.6" cy="60.2" r="6.2" fill="rgba(200,230,200,0.7)" stroke="#333" stroke-width="1.3"/><path d="M298 65 L305 72.5" stroke="#333" stroke-width="2.4" stroke-linecap="round"/><path d="M320.5 54.5 H343.5 V69.5 H320.5 V64 Q322.5 62 320.5 60 Z" fill="#e6e6e6" stroke="#555" stroke-width="1.1"/><rect x="322.6" y="50.9" width="4.4" height="5.5" fill="#11cc11" stroke="#666" stroke-width="0.5"/><rect x="322.6" y="67.2" width="4.4" height="6" fill="#11cc11" stroke="#666" stroke-width="0.5"/><rect x="329.6" y="50.9" width="4.4" height="5.5" fill="#11cc11" stroke="#666" stroke-width="0.5"/><rect x="329.6" y="67.2" width="4.4" height="6" fill="#11cc11" stroke="#666" stroke-width="0.5"/><rect x="336.6" y="50.9" width="4.4" height="5.5" fill="#11cc11" stroke="#666" stroke-width="0.5"/><rect x="336.6" y="67.2" width="4.4" height="6" fill="#11cc11" stroke="#666" stroke-width="0.5"/><rect x="366.5" y="50.5" width="20" height="23" fill="#fff" stroke="#777" stroke-width="1.1"/><path d="M369 54 H381 M369 57 H379 M369 60.5 H376 M369 63.5 H373" stroke="#666" stroke-width="1"/><path d="M371 71 L373 66 L385 54 L388 57 L376 69 Z" fill="#fff" stroke="#444" stroke-width="1.1"/><path d="M370 72 H384" stroke="#ee1111" stroke-width="1.1"/><path d="M409 53 L406 49 M419 53 L422 49 M407 62 L403 61 M421 62 L425 61 M407 68 L404 71 M421 68 L424 71" stroke="#555" stroke-width="0.8"/><ellipse cx="414.2" cy="65.5" rx="7.4" ry="7.4" fill="#cc2222"/><path d="M408 57 Q414 51 420 57 Z" fill="#222"/><path d="M410 56 h2 M416 56 h2" stroke="#e8c030" stroke-width="1.3"/><circle cx="411" cy="62" r="1.3" fill="#222"/><circle cx="417.5" cy="62" r="1.3" fill="#222"/><circle cx="410" cy="67" r="1.4" fill="#222"/><circle cx="418.5" cy="67" r="1.4" fill="#222"/><circle cx="414.2" cy="70" r="1.2" fill="#222"/><rect x="438.5" y="49.3" width="16.3" height="16.5" fill="#ececec" stroke="#c8c8c8"/><path d="M441 52 L451 57.5 L441 63 Z" fill="#f5e4c3" stroke="#d06060" stroke-width="0.9"/><rect x="447.3" y="58.3" width="16.3" height="15.8" fill="#f2f2f2" stroke="#bcbcbc"/><rect x="449.5" y="63" width="11.5" height="7" fill="#e6e6e6" stroke="#777" stroke-width="0.7"/><path d="M450.5 61 h2 M454 61 h2 M457.5 61 h2 M450.5 71.5 h2 M454 71.5 h2 M457.5 71.5 h2" stroke="#11bb11" stroke-width="2.2"/><rect x="476.3" y="50.1" width="23.6" height="23.6" fill="#fff" stroke="#666" stroke-width="1.3"/><path d="M476.3 50.1 h23.6 v4.7 h-18.9 v18.9 h-4.7 z" fill="#4d94f0"/><path d="M481.02 50.1 V73.7 M476.3 54.82 H499.9" stroke="#666" stroke-width="1.1"/><path d="M485.74 50.1 V73.7 M476.3 59.54 H499.9" stroke="#666" stroke-width="1.1"/><path d="M490.46 50.1 V73.7 M476.3 64.26 H499.9" stroke="#666" stroke-width="1.1"/><path d="M495.18 50.1 V73.7 M476.3 68.98 H499.9" stroke="#666" stroke-width="1.1"/><rect x="476.3" y="50.1" width="23.6" height="23.6" fill="none" stroke="#666" stroke-width="1.3"/><rect x="515.5" y="49.5" width="19" height="14" fill="#fff" stroke="#666" stroke-width="1.1"/><rect x="517.5" y="51.5" width="15" height="11" fill="#fff" stroke="#666" stroke-width="0.9"/><text x="525" y="60.5" font-family="Liberation Sans" font-size="9" fill="#555" text-anchor="middle">$</text><rect x="513.5" y="62.5" width="23" height="11" fill="#4d94f0" stroke="#666" stroke-width="1.1"/><text x="525" y="71" font-family="Liberation Sans" font-size="8.5" fill="#fff" text-anchor="middle">BOM</text><rect x="557.1" y="49.5" width="25.4" height="24.8" fill="#e3bf8a"/><path d="M575 49.5 H582.5 V55 H577 Q575 55 575 52 Z M574 63 H582.5 V74.3 H574 Z" fill="#006a00"/><path d="M559 49.5 V74 M562.5 49.5 V57 L566.5 61 V74 M566 49.5 V55 L570 59 V74 M570 49.5 V54 L573 57 Q574 58 577 58 H580" fill="none" stroke="#006a00" stroke-width="1.8"/><circle cx="580" cy="58" r="1.6" fill="#fff" stroke="#006a00" stroke-width="1"/><circle cx="559.5" cy="65.5" r="1.6" fill="#fff" stroke="#006a00" stroke-width="1"/></svg><svg style="left:1351px;top:82px" width="39" height="700" viewBox="1351 82 39 700"><rect x="1353.5" y="87.5" width="34" height="33" fill="#cce4f7" stroke="#99c9ef"/><path d="M1363 94 V111 L1367 107.5 L1370 113.5 L1372.5 112.5 L1369.5 106.5 L1374.5 106.5 Z" fill="#f8f8f8" stroke="#555" stroke-width="1.1"/><path d="M1358 131 H1366 V150 M1375 129 V150 M1370 138 H1381 M1370 144 H1381" fill="none" stroke="#b8b8b8" stroke-width="2.2"/><path d="M1358 151 H1367 V134 H1381" fill="none" stroke="#ff00ff" stroke-width="2.4"/><rect x="1353" y="163" width="35" height="1" fill="#8a8a8a"/><path d="M1358 182 h4 M1358 190 h4 M1378 186 h4" stroke="#a00000" stroke-width="1.2"/><path d="M1362 176 L1378 186 L1362 196 Z" fill="#f5e4c3" stroke="#a00000" stroke-width="1.3"/><path d="M1374 178 L1378 175 V177 H1383 V182 H1378 V184 Z" fill="#00d8e8" stroke="#337" stroke-width="0.6"/><path d="M1371 212 V222 M1363 222 H1379 M1366 226 H1376 M1368.5 230 H1373.5" stroke="#840000" stroke-width="2"/><path d="M1360.5 269 L1379 251" stroke="#009000" stroke-width="2" stroke-linecap="round"/><path d="M1361 306 L1379 288" stroke="#0000d0" stroke-width="3.5" stroke-linecap="round"/><path d="M1358 324 H1369 M1358 332.5 H1369" stroke="#b0b0b0" stroke-width="2"/><path d="M1369 324 L1380 331 M1369 332.5 L1380 339.5" stroke="#009000" stroke-width="2" stroke-linecap="round"/><rect x="1378.3" y="321.3" width="3.2" height="25" fill="#a8a8a8"/><path d="M1364.5 365 L1376.5 377 M1376.5 365 L1364.5 377" stroke="#0000d0" stroke-width="2"/><path d="M1358 408 H1382 M1373 396 V419.5" stroke="#b0b0b0" stroke-width="2"/><circle cx="1373" cy="408" r="3.8" fill="#008800"/><text x="1370" y="449.5" font-family="Liberation Sans" font-size="18" fill="#111" text-anchor="middle">A</text><path d="M1358 453.2 H1381.5" stroke="#009000" stroke-width="2" stroke-linecap="round"/><path d="M1358.5 474.5 H1372 L1377.5 482.5 L1372 490.5 H1358.5 Z" fill="#fff" stroke="#990000" stroke-width="1.6"/><text x="1366" y="488" font-family="Liberation Sans" font-size="13" fill="#111" text-anchor="middle">A</text><path d="M1377.5 482.5 H1382" stroke="#009000" stroke-width="1.5"/><path d="M1357.5 505.5 H1382.5 V525 L1377.5 530.5 H1357.5 Z" fill="#f2f2f2" stroke="#c8c8c8"/><text x="1364" y="524" font-family="Liberation Sans" font-size="13" fill="#111" text-anchor="middle">A</text><path d="M1370 512 H1374 L1378 518 L1374 524 H1370 Z" fill="none" stroke="#c8a000" stroke-width="1.4"/><path d="M1378 518 H1382" stroke="#009000" stroke-width="1.4"/><rect x="1357.5" y="544.5" width="20" height="20" fill="#f0f0f0" stroke="#b8b8b8"/><rect x="1361.5" y="548.5" width="21" height="21" fill="#f8f8f8" stroke="#777" stroke-width="1.2"/><path d="M1365 554 h6 M1365 562 h5 M1374 558 h6" stroke="#d04040" stroke-width="1.2"/><path d="M1368 556 v8 M1362 560 h5" stroke="#40a040" stroke-width="1"/><rect x="1357.5" y="580.5" width="19" height="20" fill="#f0f0f0" stroke="#b8b8b8"/><rect x="1361.5" y="584.5" width="21" height="21" fill="#f8f8f8" stroke="#999"/><text x="1368" y="603" font-family="Liberation Sans" font-size="12" fill="#111" text-anchor="middle">A</text><path d="M1373 594 H1376 L1380 599 L1376 604 H1373 Z" fill="none" stroke="#c8a000" stroke-width="1.3"/><path d="M1372 586 L1377 581.5 V584 H1383 V589 H1377 V591.5 Z" fill="#00d8e8" stroke="#337" stroke-width="0.6"/><rect x="1353" y="615" width="35" height="1" fill="#8a8a8a"/><rect x="1360" y="627.5" width="20" height="20" fill="none" stroke="#0000e0" stroke-width="2" stroke-dasharray="3.5 2.5"/><text x="1370" y="685" font-family="Liberation Serif" font-size="30" fill="#111" text-anchor="middle">T</text><path d="M1360 706 q0-2 2-2 h4 l2-2 h6 l2 2 h4 q2 0 2 2 v11 q0 2 -2 2 h-18 q-2 0 -2-2 z" fill="#555"/><circle cx="1370.5" cy="711.5" r="5" fill="none" stroke="#bbb" stroke-width="0.8"/><circle cx="1370.5" cy="711.5" r="2.6" fill="#ee0000"/><rect x="1377" y="705" width="3" height="2" fill="#eedd00"/><path d="M1358 720.2 H1382" stroke="#009000" stroke-width="1.6"/><path d="M1362 742 L1364 760 H1377 L1379 742 Z" fill="#ddd" stroke="#444" stroke-width="1.2"/><path d="M1366 744 V758 M1370.5 744 V758 M1375 744 V758" stroke="#444" stroke-width="1"/><path d="M1360 741 H1381" stroke="#444" stroke-width="1.6"/><path d="M1363 739 Q1367 735 1371 738 Q1375 735 1379 739" fill="#ccc" stroke="#aaa" stroke-width="0.8"/></svg>
</body></html>
